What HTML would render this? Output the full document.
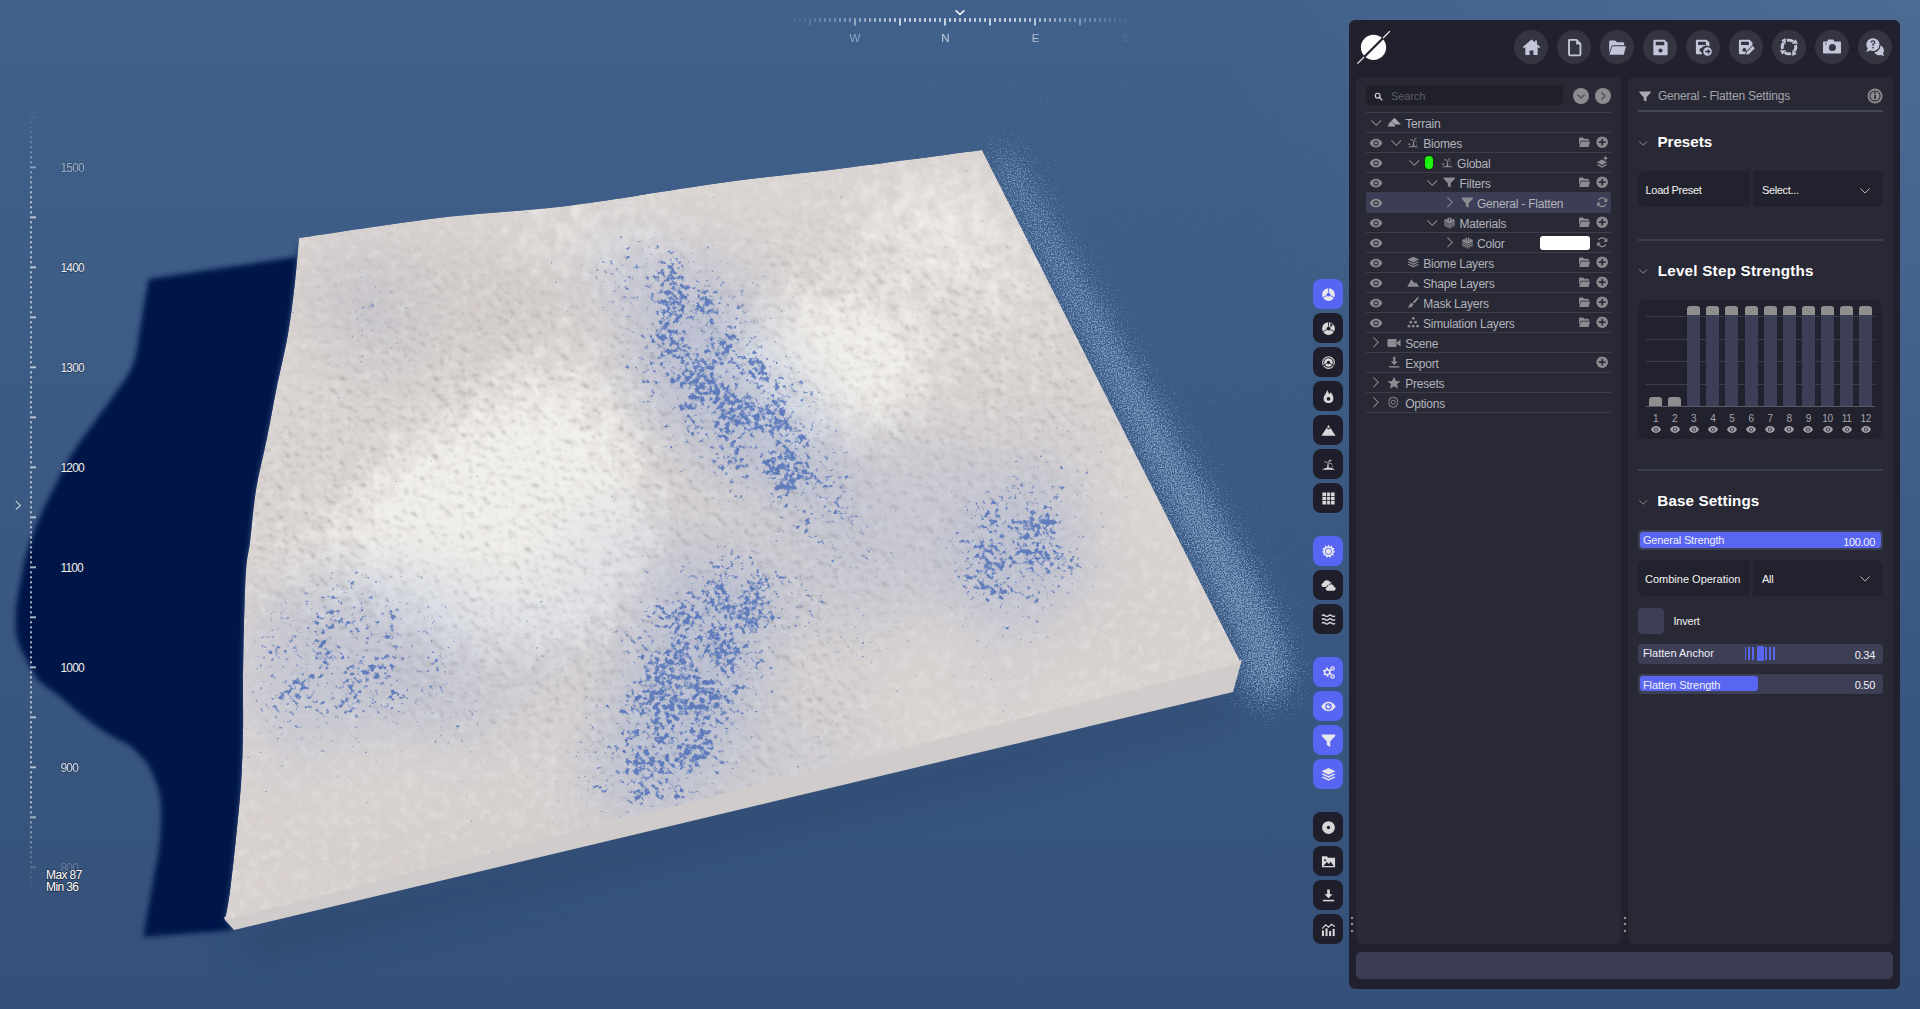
<!DOCTYPE html>
<html><head><meta charset="utf-8">
<style>
html,body{margin:0;padding:0;width:1920px;height:1009px;overflow:hidden;background:#3d5b84;font-family:"Liberation Sans",sans-serif;}
.a{position:absolute;}
.t{line-height:1;white-space:nowrap;}
svg.a{overflow:visible;}
</style></head><body>
<svg id="scene" class="a" style="left:0;top:0" width="1920" height="1009" viewBox="0 0 1920 1009">
<defs>
<linearGradient id="bg" x1="0" y1="0" x2="0" y2="1">
<stop offset="0" stop-color="#40618b"/>
<stop offset="1" stop-color="#35517a"/>
</linearGradient>
<radialGradient id="bgtr" cx="1920" cy="0" r="700" gradientUnits="userSpaceOnUse">
<stop offset="0" stop-color="#7a90b0" stop-opacity="0.22"/>
<stop offset="1" stop-color="#7a90b0" stop-opacity="0"/>
</radialGradient>
<filter id="blur2" x="-10%" y="-10%" width="120%" height="120%"><feGaussianBlur stdDeviation="2.8"/></filter>
<filter id="glow" x="-30%" y="-30%" width="160%" height="160%"><feGaussianBlur stdDeviation="16"/></filter>
<filter id="blur30" x="-50%" y="-50%" width="200%" height="200%"><feGaussianBlur stdDeviation="28"/></filter>
<filter id="blur18" x="-50%" y="-50%" width="200%" height="200%"><feGaussianBlur stdDeviation="18"/></filter>
<filter id="blur20" x="-50%" y="-50%" width="200%" height="200%"><feGaussianBlur stdDeviation="22"/></filter>
<filter id="bluespeck" filterUnits="userSpaceOnUse" x="220" y="140" width="1030" height="790">
  <feGaussianBlur in="SourceGraphic" stdDeviation="26" result="m"/>
  <feColorMatrix in="m" type="matrix" values="0 0 0 0 0  0 0 0 0 0  0 0 0 0 0  0 0 0 1 0" result="ma"/>
  <feTurbulence type="fractalNoise" baseFrequency="0.035" numOctaves="2" seed="19" result="n2"/>
  <feColorMatrix in="n2" type="matrix" values="0 0 0 0 0  0 0 0 0 0  0 0 0 0 0  2.2 0 0 0 -0.55" result="n2a"/>
  <feComposite in="ma" in2="n2a" operator="arithmetic" k1="1.3" k2="0.25" k3="0" k4="0" result="mm"/>
  <feTurbulence type="fractalNoise" baseFrequency="0.2" numOctaves="3" seed="7" result="n"/>
  <feColorMatrix in="n" type="matrix" values="0 0 0 0 0  0 0 0 0 0  0 0 0 0 0  1 0 0 0 0" result="na"/>
  <feComposite in="mm" in2="na" operator="arithmetic" k1="0" k2="2.3" k3="-5.5" k4="1.02" result="a"/>
  <feFlood flood-color="#3a60b4"/>
  <feComposite in2="a" operator="in"/>
  <feGaussianBlur stdDeviation="0.6"/>
</filter>
<filter id="brightspeck" filterUnits="userSpaceOnUse" x="220" y="140" width="1030" height="790">
  <feGaussianBlur in="SourceGraphic" stdDeviation="30" result="m"/>
  <feColorMatrix in="m" type="matrix" values="0 0 0 0 0  0 0 0 0 0  0 0 0 0 0  0 0 0 1 0" result="ma"/>
  <feTurbulence type="fractalNoise" baseFrequency="0.07" numOctaves="4" seed="3" result="n"/>
  <feColorMatrix in="n" type="matrix" values="0 0 0 0 0  0 0 0 0 0  0 0 0 0 0  1 0 0 0 0" result="na"/>
  <feComposite in="ma" in2="na" operator="arithmetic" k1="0" k2="1.6" k3="-1.2" k4="0.45" result="a"/>
  <feFlood flood-color="#f1efea"/>
  <feComposite in2="a" operator="in"/>
</filter>
<filter id="glowspeck" filterUnits="userSpaceOnUse" x="900" y="80" width="480" height="720">
  <feGaussianBlur in="SourceGraphic" stdDeviation="18" result="m"/>
  <feColorMatrix in="m" type="matrix" values="0 0 0 0 0  0 0 0 0 0  0 0 0 0 0  0 0 0 1 0" result="ma"/>
  <feTurbulence type="fractalNoise" baseFrequency="0.7" numOctaves="2" seed="5" result="n"/>
  <feColorMatrix in="n" type="matrix" values="0 0 0 0 0  0 0 0 0 0  0 0 0 0 0  1 0 0 0 0" result="na"/>
  <feComposite in="ma" in2="na" operator="arithmetic" k1="0" k2="1.5" k3="-3" k4="0.72" result="a"/>
  <feFlood flood-color="#7d9dc2"/>
  <feComposite in2="a" operator="in"/>
</filter>
<filter id="relief" filterUnits="userSpaceOnUse" x="220" y="140" width="1030" height="790" color-interpolation-filters="sRGB">
  <feTurbulence type="fractalNoise" baseFrequency="0.14" numOctaves="3" seed="2" result="n"/>
  <feDiffuseLighting in="n" surfaceScale="2.2" diffuseConstant="1.32" lighting-color="#ffffff" result="l">
    <feDistantLight azimuth="-60" elevation="58"/>
  </feDiffuseLighting>
  <feGaussianBlur stdDeviation="0.9"/>
</filter>
<mask id="roughmask" maskUnits="userSpaceOnUse" x="0" y="0" width="1920" height="1009">
  <g filter="url(#blur30)">
    <ellipse cx="560" cy="520" rx="330" ry="220" fill="#fff" opacity="0.9"/>
    <ellipse cx="850" cy="420" rx="260" ry="200" fill="#fff" opacity="0.8"/>
    <ellipse cx="720" cy="700" rx="150" ry="130" fill="#fff" opacity="0.8"/>
    <ellipse cx="420" cy="300" rx="130" ry="60" fill="#fff" opacity="0.5"/>
  </g>
</mask>
<clipPath id="tclip"><path d="M299,238 C322.2,234.7 396.3,223.0 438.0,218.0 C479.7,213.0 518.2,211.3 549.0,208.0 C579.8,204.7 604.5,200.7 623.0,198.0 C641.5,195.3 641.5,194.8 660.0,192.0 C678.5,189.2 703.2,185.0 734.0,181.0 C764.8,177.0 803.7,173.2 845.0,168.0 C886.3,162.8 959.2,153.0 982.0,150.0 L1241,663 L225,920 C225.8,915.2 228.2,904.7 230.0,891.0 C231.8,877.3 234.2,855.8 236.0,838.0 C237.8,820.2 239.8,801.8 241.0,784.0 C242.2,766.2 242.7,748.8 243.0,731.0 C243.3,713.2 242.8,694.8 243.0,677.0 C243.2,659.2 243.5,641.8 244.0,624.0 C244.5,606.2 245.0,583.7 246.0,570.0 C247.0,556.3 248.3,555.3 250.0,542.0 C251.7,528.7 253.2,507.3 256.0,490.0 C258.8,472.7 263.5,455.3 267.0,438.0 C270.5,420.7 273.5,403.3 277.0,386.0 C280.5,368.7 285.0,351.3 288.0,334.0 C291.0,316.7 293.2,298.0 295.0,282.0 C296.8,266.0 298.3,245.3 299.0,238.0 Z"/></clipPath>
<filter id="speck" filterUnits="userSpaceOnUse" x="220" y="140" width="1030" height="790">
  <feTurbulence type="fractalNoise" baseFrequency="0.14" numOctaves="3" seed="7" result="n"/>
  <feColorMatrix in="n" type="matrix" values="0 0 0 0 0.22  0 0 0 0 0.38  0 0 0 0 0.74  -11 0 0 0 4.6" result="s"/>
</filter>
<filter id="mottle" filterUnits="userSpaceOnUse" x="220" y="140" width="1030" height="790">
  <feTurbulence type="fractalNoise" baseFrequency="0.1" numOctaves="3" seed="11" result="n"/>
  <feColorMatrix in="n" type="matrix" values="0 0 0 0 1  0 0 0 0 1  0 0 0 0 1  2 0 0 0 -0.9" result="w"/>
</filter>
<mask id="bluemask" maskUnits="userSpaceOnUse" x="0" y="0" width="1920" height="1009">
  <g filter="url(#blur18)"><ellipse cx="735" cy="405" rx="120" ry="55" transform="rotate(42 735 405)" fill="#fff" opacity="1.00"/><ellipse cx="680" cy="285" rx="85" ry="30" transform="rotate(15 680 285)" fill="#fff" opacity="0.75"/><ellipse cx="620" cy="270" rx="35" ry="25" transform="rotate(0 620 270)" fill="#fff" opacity="0.45"/><ellipse cx="835" cy="520" rx="60" ry="30" transform="rotate(30 835 520)" fill="#fff" opacity="0.60"/><ellipse cx="790" cy="470" rx="40" ry="30" transform="rotate(0 790 470)" fill="#fff" opacity="0.50"/><ellipse cx="690" cy="680" rx="130" ry="60" transform="rotate(112 690 680)" fill="#fff" opacity="1.00"/><ellipse cx="770" cy="600" rx="45" ry="40" transform="rotate(0 770 600)" fill="#fff" opacity="0.50"/><ellipse cx="650" cy="790" rx="40" ry="35" transform="rotate(0 650 790)" fill="#fff" opacity="0.50"/><ellipse cx="860" cy="620" rx="40" ry="40" transform="rotate(0 860 620)" fill="#fff" opacity="0.35"/><ellipse cx="1015" cy="555" rx="70" ry="58" transform="rotate(-20 1015 555)" fill="#fff" opacity="0.85"/><ellipse cx="1050" cy="470" rx="30" ry="40" transform="rotate(0 1050 470)" fill="#fff" opacity="0.40"/><ellipse cx="995" cy="665" rx="25" ry="25" transform="rotate(0 995 665)" fill="#fff" opacity="0.40"/><ellipse cx="350" cy="655" rx="105" ry="75" transform="rotate(-10 350 655)" fill="#fff" opacity="0.55"/><ellipse cx="290" cy="720" rx="45" ry="40" transform="rotate(0 290 720)" fill="#fff" opacity="0.35"/><ellipse cx="370" cy="310" rx="28" ry="50" transform="rotate(-20 370 310)" fill="#fff" opacity="0.45"/><ellipse cx="560" cy="630" rx="35" ry="40" transform="rotate(0 560 630)" fill="#fff" opacity="0.30"/><ellipse cx="600" cy="770" rx="40" ry="40" transform="rotate(0 600 770)" fill="#fff" opacity="0.35"/><ellipse cx="460" cy="720" rx="50" ry="40" transform="rotate(0 460 720)" fill="#fff" opacity="0.30"/></g>
</mask>
</defs>
<rect width="1920" height="1009" fill="url(#bg)"/>
<rect width="1920" height="1009" fill="url(#bgtr)"/>
<rect x="789.0" y="18.2" width="2" height="3.7" fill="#dde4ee" opacity="0.04"/>
<rect x="794.0" y="18.2" width="2" height="3.7" fill="#dde4ee" opacity="0.07"/>
<rect x="799.0" y="18.2" width="2" height="3.7" fill="#dde4ee" opacity="0.11"/>
<rect x="804.0" y="18.2" width="2" height="3.7" fill="#dde4ee" opacity="0.15"/>
<rect x="809.0" y="18.2" width="2" height="7.3" fill="#dde4ee" opacity="0.18"/>
<rect x="814.0" y="18.2" width="2" height="3.7" fill="#dde4ee" opacity="0.22"/>
<rect x="819.0" y="18.2" width="2" height="3.7" fill="#dde4ee" opacity="0.26"/>
<rect x="824.0" y="18.2" width="2" height="3.7" fill="#dde4ee" opacity="0.30"/>
<rect x="829.0" y="18.2" width="2" height="3.7" fill="#dde4ee" opacity="0.33"/>
<rect x="834.0" y="18.2" width="2" height="3.7" fill="#dde4ee" opacity="0.37"/>
<rect x="839.0" y="18.2" width="2" height="3.7" fill="#dde4ee" opacity="0.41"/>
<rect x="844.0" y="18.2" width="2" height="3.7" fill="#dde4ee" opacity="0.44"/>
<rect x="849.0" y="18.2" width="2" height="3.7" fill="#dde4ee" opacity="0.48"/>
<rect x="854.0" y="18.2" width="2" height="7.3" fill="#dde4ee" opacity="0.52"/>
<rect x="859.0" y="18.2" width="2" height="3.7" fill="#dde4ee" opacity="0.55"/>
<rect x="864.0" y="18.2" width="2" height="3.7" fill="#dde4ee" opacity="0.59"/>
<rect x="869.0" y="18.2" width="2" height="3.7" fill="#dde4ee" opacity="0.63"/>
<rect x="874.0" y="18.2" width="2" height="3.7" fill="#dde4ee" opacity="0.67"/>
<rect x="879.0" y="18.2" width="2" height="3.7" fill="#dde4ee" opacity="0.70"/>
<rect x="884.0" y="18.2" width="2" height="3.7" fill="#dde4ee" opacity="0.74"/>
<rect x="889.0" y="18.2" width="2" height="3.7" fill="#dde4ee" opacity="0.78"/>
<rect x="894.0" y="18.2" width="2" height="3.7" fill="#dde4ee" opacity="0.81"/>
<rect x="899.0" y="18.2" width="2" height="7.3" fill="#dde4ee" opacity="0.85"/>
<rect x="904.0" y="18.2" width="2" height="3.7" fill="#dde4ee" opacity="0.85"/>
<rect x="909.0" y="18.2" width="2" height="3.7" fill="#dde4ee" opacity="0.85"/>
<rect x="914.0" y="18.2" width="2" height="3.7" fill="#dde4ee" opacity="0.85"/>
<rect x="919.0" y="18.2" width="2" height="3.7" fill="#dde4ee" opacity="0.85"/>
<rect x="924.0" y="18.2" width="2" height="3.7" fill="#dde4ee" opacity="0.85"/>
<rect x="929.0" y="18.2" width="2" height="3.7" fill="#dde4ee" opacity="0.85"/>
<rect x="934.0" y="18.2" width="2" height="3.7" fill="#dde4ee" opacity="0.85"/>
<rect x="939.0" y="18.2" width="2" height="3.7" fill="#dde4ee" opacity="0.85"/>
<rect x="944.0" y="18.2" width="2" height="7.3" fill="#dde4ee" opacity="0.85"/>
<rect x="949.0" y="18.2" width="2" height="3.7" fill="#dde4ee" opacity="0.85"/>
<rect x="954.0" y="18.2" width="2" height="3.7" fill="#dde4ee" opacity="0.85"/>
<rect x="959.0" y="18.2" width="2" height="3.7" fill="#dde4ee" opacity="0.85"/>
<rect x="964.0" y="18.2" width="2" height="3.7" fill="#dde4ee" opacity="0.85"/>
<rect x="969.0" y="18.2" width="2" height="3.7" fill="#dde4ee" opacity="0.85"/>
<rect x="974.0" y="18.2" width="2" height="3.7" fill="#dde4ee" opacity="0.85"/>
<rect x="979.0" y="18.2" width="2" height="3.7" fill="#dde4ee" opacity="0.85"/>
<rect x="984.0" y="18.2" width="2" height="3.7" fill="#dde4ee" opacity="0.85"/>
<rect x="989.0" y="18.2" width="2" height="7.3" fill="#dde4ee" opacity="0.85"/>
<rect x="994.0" y="18.2" width="2" height="3.7" fill="#dde4ee" opacity="0.85"/>
<rect x="999.0" y="18.2" width="2" height="3.7" fill="#dde4ee" opacity="0.85"/>
<rect x="1004.0" y="18.2" width="2" height="3.7" fill="#dde4ee" opacity="0.85"/>
<rect x="1009.0" y="18.2" width="2" height="3.7" fill="#dde4ee" opacity="0.85"/>
<rect x="1014.0" y="18.2" width="2" height="3.7" fill="#dde4ee" opacity="0.85"/>
<rect x="1019.0" y="18.2" width="2" height="3.7" fill="#dde4ee" opacity="0.85"/>
<rect x="1024.0" y="18.2" width="2" height="3.7" fill="#dde4ee" opacity="0.81"/>
<rect x="1029.0" y="18.2" width="2" height="3.7" fill="#dde4ee" opacity="0.78"/>
<rect x="1034.0" y="18.2" width="2" height="7.3" fill="#dde4ee" opacity="0.74"/>
<rect x="1039.0" y="18.2" width="2" height="3.7" fill="#dde4ee" opacity="0.70"/>
<rect x="1044.0" y="18.2" width="2" height="3.7" fill="#dde4ee" opacity="0.67"/>
<rect x="1049.0" y="18.2" width="2" height="3.7" fill="#dde4ee" opacity="0.63"/>
<rect x="1054.0" y="18.2" width="2" height="3.7" fill="#dde4ee" opacity="0.59"/>
<rect x="1059.0" y="18.2" width="2" height="3.7" fill="#dde4ee" opacity="0.55"/>
<rect x="1064.0" y="18.2" width="2" height="3.7" fill="#dde4ee" opacity="0.52"/>
<rect x="1069.0" y="18.2" width="2" height="3.7" fill="#dde4ee" opacity="0.48"/>
<rect x="1074.0" y="18.2" width="2" height="3.7" fill="#dde4ee" opacity="0.44"/>
<rect x="1079.0" y="18.2" width="2" height="7.3" fill="#dde4ee" opacity="0.41"/>
<rect x="1084.0" y="18.2" width="2" height="3.7" fill="#dde4ee" opacity="0.37"/>
<rect x="1089.0" y="18.2" width="2" height="3.7" fill="#dde4ee" opacity="0.33"/>
<rect x="1094.0" y="18.2" width="2" height="3.7" fill="#dde4ee" opacity="0.30"/>
<rect x="1099.0" y="18.2" width="2" height="3.7" fill="#dde4ee" opacity="0.26"/>
<rect x="1104.0" y="18.2" width="2" height="3.7" fill="#dde4ee" opacity="0.22"/>
<rect x="1109.0" y="18.2" width="2" height="3.7" fill="#dde4ee" opacity="0.18"/>
<rect x="1114.0" y="18.2" width="2" height="3.7" fill="#dde4ee" opacity="0.15"/>
<rect x="1119.0" y="18.2" width="2" height="3.7" fill="#dde4ee" opacity="0.11"/>
<rect x="1124.0" y="18.2" width="2" height="7.3" fill="#dde4ee" opacity="0.07"/>
<text x="855" y="41.6" font-size="11.5" text-anchor="middle" fill="#dfe6ef" opacity="0.50" font-family="Liberation Sans">W</text>
<text x="945.5" y="41.6" font-size="11.5" text-anchor="middle" fill="#dfe6ef" opacity="0.80" font-family="Liberation Sans">N</text>
<text x="1035.5" y="41.6" font-size="11.5" text-anchor="middle" fill="#dfe6ef" opacity="0.70" font-family="Liberation Sans">E</text>
<text x="1125" y="41.6" font-size="11.5" text-anchor="middle" fill="#dfe6ef" opacity="0.10" font-family="Liberation Sans">S</text>
<path d="M955.6,10.4 L960,14.4 L964.4,10.4" fill="none" stroke="#f4f6fa" stroke-width="1.5"/>
<path filter="url(#glowspeck)" fill="#fff" d="M978,146 L1238,663 L1230,695 L1265,718 L1305,685 L1278,600 L1012,140 Z"/>
<path filter="url(#blur2)" fill="#03144a" d="M296,257 L148.6,279 C148.0,282.4 146.4,291.2 145.0,299.5 C143.6,307.8 141.4,320.6 140.0,329.0 C138.6,337.4 138.3,343.2 136.8,350.0 C135.3,356.8 135.1,361.7 130.8,370.0 C126.5,378.3 117.9,389.7 111.0,399.6 C104.1,409.5 95.8,420.1 89.2,429.3 C82.6,438.5 76.4,447.1 71.4,455.0 C66.5,462.9 63.8,468.7 59.5,477.0 C55.2,485.3 49.9,495.4 45.6,504.6 C41.3,513.8 37.0,524.0 33.7,532.4 C30.4,540.8 28.1,547.2 26.0,555.0 C23.9,562.8 22.7,569.6 21.0,579.0 C19.3,588.4 16.6,601.5 16.0,611.5 C15.4,621.5 15.4,630.8 17.3,639.0 C19.2,647.2 23.6,654.0 27.3,661.0 C31.0,668.0 34.2,675.2 39.6,681.0 C45.0,686.8 52.9,690.7 59.5,696.0 C66.1,701.3 72.4,707.7 79.0,713.0 C85.6,718.3 92.3,723.5 99.0,728.0 C105.7,732.5 114.0,737.2 119.0,740.0 C124.0,742.8 124.5,741.3 129.0,745.0 C133.5,748.7 141.5,755.8 146.0,762.0 C150.5,768.2 153.5,775.0 156.0,782.0 C158.5,789.0 160.3,794.1 161.0,804.0 C161.7,813.9 161.2,829.0 160.0,841.5 C158.8,854.0 155.7,867.1 153.6,879.0 C151.5,890.9 149.1,903.3 147.4,913.0 C145.7,922.7 143.9,933.0 143.2,937.0 L234,930 L225,920 C225.8,915.2 228.2,904.7 230.0,891.0 C231.8,877.3 234.2,855.8 236.0,838.0 C237.8,820.2 239.8,801.8 241.0,784.0 C242.2,766.2 242.7,748.8 243.0,731.0 C243.3,713.2 242.8,694.8 243.0,677.0 C243.2,659.2 243.5,641.8 244.0,624.0 C244.5,606.2 245.0,583.7 246.0,570.0 C247.0,556.3 248.3,555.3 250.0,542.0 C251.7,528.7 253.2,507.3 256.0,490.0 C258.8,472.7 263.5,455.3 267.0,438.0 C270.5,420.7 273.5,403.3 277.0,386.0 C280.5,368.7 285.0,351.3 288.0,334.0 C291.0,316.7 293.2,298.0 295.0,282.0 C296.8,266.0 298.3,245.3 299.0,238.0 Z"/>
<rect x="30" y="116.3" width="6" height="2" fill="#dfe6f0" opacity="0.08"/>
<rect x="30" y="121.3" width="2" height="2" fill="#dfe6f0" opacity="0.09"/>
<rect x="30" y="126.3" width="2" height="2" fill="#dfe6f0" opacity="0.13"/>
<rect x="30" y="131.3" width="2" height="2" fill="#dfe6f0" opacity="0.17"/>
<rect x="30" y="136.3" width="2" height="2" fill="#dfe6f0" opacity="0.22"/>
<rect x="30" y="141.3" width="2" height="2" fill="#dfe6f0" opacity="0.26"/>
<rect x="30" y="146.3" width="2" height="2" fill="#dfe6f0" opacity="0.30"/>
<rect x="30" y="151.3" width="2" height="2" fill="#dfe6f0" opacity="0.34"/>
<rect x="30" y="156.3" width="2" height="2" fill="#dfe6f0" opacity="0.39"/>
<rect x="30" y="161.3" width="2" height="2" fill="#dfe6f0" opacity="0.43"/>
<rect x="30" y="166.3" width="6" height="2" fill="#dfe6f0" opacity="0.47"/>
<rect x="30" y="171.3" width="2" height="2" fill="#dfe6f0" opacity="0.51"/>
<rect x="30" y="176.3" width="2" height="2" fill="#dfe6f0" opacity="0.56"/>
<rect x="30" y="181.3" width="2" height="2" fill="#dfe6f0" opacity="0.60"/>
<rect x="30" y="186.3" width="2" height="2" fill="#dfe6f0" opacity="0.64"/>
<rect x="30" y="191.3" width="2" height="2" fill="#dfe6f0" opacity="0.68"/>
<rect x="30" y="196.3" width="2" height="2" fill="#dfe6f0" opacity="0.73"/>
<rect x="30" y="201.3" width="2" height="2" fill="#dfe6f0" opacity="0.75"/>
<rect x="30" y="206.3" width="2" height="2" fill="#dfe6f0" opacity="0.75"/>
<rect x="30" y="211.3" width="2" height="2" fill="#dfe6f0" opacity="0.75"/>
<rect x="30" y="216.3" width="6" height="2" fill="#dfe6f0" opacity="0.75"/>
<rect x="30" y="221.3" width="2" height="2" fill="#dfe6f0" opacity="0.75"/>
<rect x="30" y="226.3" width="2" height="2" fill="#dfe6f0" opacity="0.75"/>
<rect x="30" y="231.3" width="2" height="2" fill="#dfe6f0" opacity="0.75"/>
<rect x="30" y="236.3" width="2" height="2" fill="#dfe6f0" opacity="0.75"/>
<rect x="30" y="241.3" width="2" height="2" fill="#dfe6f0" opacity="0.75"/>
<rect x="30" y="246.3" width="2" height="2" fill="#dfe6f0" opacity="0.75"/>
<rect x="30" y="251.3" width="2" height="2" fill="#dfe6f0" opacity="0.75"/>
<rect x="30" y="256.3" width="2" height="2" fill="#dfe6f0" opacity="0.75"/>
<rect x="30" y="261.3" width="2" height="2" fill="#dfe6f0" opacity="0.75"/>
<rect x="30" y="266.3" width="6" height="2" fill="#dfe6f0" opacity="0.75"/>
<rect x="30" y="271.3" width="2" height="2" fill="#dfe6f0" opacity="0.75"/>
<rect x="30" y="276.3" width="2" height="2" fill="#dfe6f0" opacity="0.75"/>
<rect x="30" y="281.3" width="2" height="2" fill="#dfe6f0" opacity="0.75"/>
<rect x="30" y="286.3" width="2" height="2" fill="#dfe6f0" opacity="0.75"/>
<rect x="30" y="291.3" width="2" height="2" fill="#dfe6f0" opacity="0.75"/>
<rect x="30" y="296.3" width="2" height="2" fill="#dfe6f0" opacity="0.75"/>
<rect x="30" y="301.3" width="2" height="2" fill="#dfe6f0" opacity="0.75"/>
<rect x="30" y="306.3" width="2" height="2" fill="#dfe6f0" opacity="0.75"/>
<rect x="30" y="311.3" width="2" height="2" fill="#dfe6f0" opacity="0.75"/>
<rect x="30" y="316.3" width="6" height="2" fill="#dfe6f0" opacity="0.75"/>
<rect x="30" y="321.3" width="2" height="2" fill="#dfe6f0" opacity="0.75"/>
<rect x="30" y="326.3" width="2" height="2" fill="#dfe6f0" opacity="0.75"/>
<rect x="30" y="331.3" width="2" height="2" fill="#dfe6f0" opacity="0.75"/>
<rect x="30" y="336.3" width="2" height="2" fill="#dfe6f0" opacity="0.75"/>
<rect x="30" y="341.3" width="2" height="2" fill="#dfe6f0" opacity="0.75"/>
<rect x="30" y="346.3" width="2" height="2" fill="#dfe6f0" opacity="0.75"/>
<rect x="30" y="351.3" width="2" height="2" fill="#dfe6f0" opacity="0.75"/>
<rect x="30" y="356.3" width="2" height="2" fill="#dfe6f0" opacity="0.75"/>
<rect x="30" y="361.3" width="2" height="2" fill="#dfe6f0" opacity="0.75"/>
<rect x="30" y="366.3" width="6" height="2" fill="#dfe6f0" opacity="0.75"/>
<rect x="30" y="371.3" width="2" height="2" fill="#dfe6f0" opacity="0.75"/>
<rect x="30" y="376.3" width="2" height="2" fill="#dfe6f0" opacity="0.75"/>
<rect x="30" y="381.3" width="2" height="2" fill="#dfe6f0" opacity="0.75"/>
<rect x="30" y="386.3" width="2" height="2" fill="#dfe6f0" opacity="0.75"/>
<rect x="30" y="391.3" width="2" height="2" fill="#dfe6f0" opacity="0.75"/>
<rect x="30" y="396.3" width="2" height="2" fill="#dfe6f0" opacity="0.75"/>
<rect x="30" y="401.3" width="2" height="2" fill="#dfe6f0" opacity="0.75"/>
<rect x="30" y="406.3" width="2" height="2" fill="#dfe6f0" opacity="0.75"/>
<rect x="30" y="411.3" width="2" height="2" fill="#dfe6f0" opacity="0.75"/>
<rect x="30" y="416.3" width="6" height="2" fill="#dfe6f0" opacity="0.75"/>
<rect x="30" y="421.3" width="2" height="2" fill="#dfe6f0" opacity="0.75"/>
<rect x="30" y="426.3" width="2" height="2" fill="#dfe6f0" opacity="0.75"/>
<rect x="30" y="431.3" width="2" height="2" fill="#dfe6f0" opacity="0.75"/>
<rect x="30" y="436.3" width="2" height="2" fill="#dfe6f0" opacity="0.75"/>
<rect x="30" y="441.3" width="2" height="2" fill="#dfe6f0" opacity="0.75"/>
<rect x="30" y="446.3" width="2" height="2" fill="#dfe6f0" opacity="0.75"/>
<rect x="30" y="451.3" width="2" height="2" fill="#dfe6f0" opacity="0.75"/>
<rect x="30" y="456.3" width="2" height="2" fill="#dfe6f0" opacity="0.75"/>
<rect x="30" y="461.3" width="2" height="2" fill="#dfe6f0" opacity="0.75"/>
<rect x="30" y="466.3" width="6" height="2" fill="#dfe6f0" opacity="0.75"/>
<rect x="30" y="471.3" width="2" height="2" fill="#dfe6f0" opacity="0.75"/>
<rect x="30" y="476.3" width="2" height="2" fill="#dfe6f0" opacity="0.75"/>
<rect x="30" y="481.3" width="2" height="2" fill="#dfe6f0" opacity="0.75"/>
<rect x="30" y="486.3" width="2" height="2" fill="#dfe6f0" opacity="0.75"/>
<rect x="30" y="491.3" width="2" height="2" fill="#dfe6f0" opacity="0.75"/>
<rect x="30" y="496.3" width="2" height="2" fill="#dfe6f0" opacity="0.75"/>
<rect x="30" y="501.3" width="2" height="2" fill="#dfe6f0" opacity="0.75"/>
<rect x="30" y="506.3" width="2" height="2" fill="#dfe6f0" opacity="0.75"/>
<rect x="30" y="511.3" width="2" height="2" fill="#dfe6f0" opacity="0.75"/>
<rect x="30" y="516.3" width="6" height="2" fill="#dfe6f0" opacity="0.75"/>
<rect x="30" y="521.3" width="2" height="2" fill="#dfe6f0" opacity="0.75"/>
<rect x="30" y="526.3" width="2" height="2" fill="#dfe6f0" opacity="0.75"/>
<rect x="30" y="531.3" width="2" height="2" fill="#dfe6f0" opacity="0.75"/>
<rect x="30" y="536.3" width="2" height="2" fill="#dfe6f0" opacity="0.75"/>
<rect x="30" y="541.3" width="2" height="2" fill="#dfe6f0" opacity="0.75"/>
<rect x="30" y="546.3" width="2" height="2" fill="#dfe6f0" opacity="0.75"/>
<rect x="30" y="551.3" width="2" height="2" fill="#dfe6f0" opacity="0.75"/>
<rect x="30" y="556.3" width="2" height="2" fill="#dfe6f0" opacity="0.75"/>
<rect x="30" y="561.3" width="2" height="2" fill="#dfe6f0" opacity="0.75"/>
<rect x="30" y="566.3" width="6" height="2" fill="#dfe6f0" opacity="0.75"/>
<rect x="30" y="571.3" width="2" height="2" fill="#dfe6f0" opacity="0.75"/>
<rect x="30" y="576.3" width="2" height="2" fill="#dfe6f0" opacity="0.75"/>
<rect x="30" y="581.3" width="2" height="2" fill="#dfe6f0" opacity="0.75"/>
<rect x="30" y="586.3" width="2" height="2" fill="#dfe6f0" opacity="0.75"/>
<rect x="30" y="591.3" width="2" height="2" fill="#dfe6f0" opacity="0.75"/>
<rect x="30" y="596.3" width="2" height="2" fill="#dfe6f0" opacity="0.75"/>
<rect x="30" y="601.3" width="2" height="2" fill="#dfe6f0" opacity="0.75"/>
<rect x="30" y="606.3" width="2" height="2" fill="#dfe6f0" opacity="0.75"/>
<rect x="30" y="611.3" width="2" height="2" fill="#dfe6f0" opacity="0.75"/>
<rect x="30" y="616.3" width="6" height="2" fill="#dfe6f0" opacity="0.75"/>
<rect x="30" y="621.3" width="2" height="2" fill="#dfe6f0" opacity="0.75"/>
<rect x="30" y="626.3" width="2" height="2" fill="#dfe6f0" opacity="0.75"/>
<rect x="30" y="631.3" width="2" height="2" fill="#dfe6f0" opacity="0.75"/>
<rect x="30" y="636.3" width="2" height="2" fill="#dfe6f0" opacity="0.75"/>
<rect x="30" y="641.3" width="2" height="2" fill="#dfe6f0" opacity="0.75"/>
<rect x="30" y="646.3" width="2" height="2" fill="#dfe6f0" opacity="0.75"/>
<rect x="30" y="651.3" width="2" height="2" fill="#dfe6f0" opacity="0.75"/>
<rect x="30" y="656.3" width="2" height="2" fill="#dfe6f0" opacity="0.75"/>
<rect x="30" y="661.3" width="2" height="2" fill="#dfe6f0" opacity="0.75"/>
<rect x="30" y="666.3" width="6" height="2" fill="#dfe6f0" opacity="0.75"/>
<rect x="30" y="671.3" width="2" height="2" fill="#dfe6f0" opacity="0.75"/>
<rect x="30" y="676.3" width="2" height="2" fill="#dfe6f0" opacity="0.75"/>
<rect x="30" y="681.3" width="2" height="2" fill="#dfe6f0" opacity="0.75"/>
<rect x="30" y="686.3" width="2" height="2" fill="#dfe6f0" opacity="0.75"/>
<rect x="30" y="691.3" width="2" height="2" fill="#dfe6f0" opacity="0.75"/>
<rect x="30" y="696.3" width="2" height="2" fill="#dfe6f0" opacity="0.75"/>
<rect x="30" y="701.3" width="2" height="2" fill="#dfe6f0" opacity="0.75"/>
<rect x="30" y="706.3" width="2" height="2" fill="#dfe6f0" opacity="0.75"/>
<rect x="30" y="711.3" width="2" height="2" fill="#dfe6f0" opacity="0.75"/>
<rect x="30" y="716.3" width="6" height="2" fill="#dfe6f0" opacity="0.75"/>
<rect x="30" y="721.3" width="2" height="2" fill="#dfe6f0" opacity="0.75"/>
<rect x="30" y="726.3" width="2" height="2" fill="#dfe6f0" opacity="0.75"/>
<rect x="30" y="731.3" width="2" height="2" fill="#dfe6f0" opacity="0.75"/>
<rect x="30" y="736.3" width="2" height="2" fill="#dfe6f0" opacity="0.75"/>
<rect x="30" y="741.3" width="2" height="2" fill="#dfe6f0" opacity="0.75"/>
<rect x="30" y="746.3" width="2" height="2" fill="#dfe6f0" opacity="0.75"/>
<rect x="30" y="751.3" width="2" height="2" fill="#dfe6f0" opacity="0.75"/>
<rect x="30" y="756.3" width="2" height="2" fill="#dfe6f0" opacity="0.75"/>
<rect x="30" y="761.3" width="2" height="2" fill="#dfe6f0" opacity="0.75"/>
<rect x="30" y="766.3" width="6" height="2" fill="#dfe6f0" opacity="0.75"/>
<rect x="30" y="771.3" width="2" height="2" fill="#dfe6f0" opacity="0.75"/>
<rect x="30" y="776.3" width="2" height="2" fill="#dfe6f0" opacity="0.75"/>
<rect x="30" y="781.3" width="2" height="2" fill="#dfe6f0" opacity="0.75"/>
<rect x="30" y="786.3" width="2" height="2" fill="#dfe6f0" opacity="0.75"/>
<rect x="30" y="791.3" width="2" height="2" fill="#dfe6f0" opacity="0.75"/>
<rect x="30" y="796.3" width="2" height="2" fill="#dfe6f0" opacity="0.75"/>
<rect x="30" y="801.3" width="2" height="2" fill="#dfe6f0" opacity="0.73"/>
<rect x="30" y="806.3" width="2" height="2" fill="#dfe6f0" opacity="0.69"/>
<rect x="30" y="811.3" width="2" height="2" fill="#dfe6f0" opacity="0.65"/>
<rect x="30" y="816.3" width="6" height="2" fill="#dfe6f0" opacity="0.61"/>
<rect x="30" y="821.3" width="2" height="2" fill="#dfe6f0" opacity="0.57"/>
<rect x="30" y="826.3" width="2" height="2" fill="#dfe6f0" opacity="0.53"/>
<rect x="30" y="831.3" width="2" height="2" fill="#dfe6f0" opacity="0.49"/>
<rect x="30" y="836.3" width="2" height="2" fill="#dfe6f0" opacity="0.45"/>
<rect x="30" y="841.3" width="2" height="2" fill="#dfe6f0" opacity="0.41"/>
<rect x="30" y="846.3" width="2" height="2" fill="#dfe6f0" opacity="0.36"/>
<rect x="30" y="851.3" width="2" height="2" fill="#dfe6f0" opacity="0.32"/>
<rect x="30" y="856.3" width="2" height="2" fill="#dfe6f0" opacity="0.28"/>
<rect x="30" y="861.3" width="2" height="2" fill="#dfe6f0" opacity="0.24"/>
<rect x="30" y="866.3" width="6" height="2" fill="#dfe6f0" opacity="0.20"/>
<rect x="30" y="871.3" width="2" height="2" fill="#dfe6f0" opacity="0.16"/>
<rect x="30" y="876.3" width="2" height="2" fill="#dfe6f0" opacity="0.12"/>
<rect x="30" y="881.3" width="2" height="2" fill="#dfe6f0" opacity="0.08"/>
<rect x="30" y="886.3" width="2" height="2" fill="#dfe6f0" opacity="0.06"/>
<text x="60.5" y="171.7" font-size="12" letter-spacing="-0.85" fill="#e8ecf2" opacity="0.55" stroke="#15223a" stroke-width="1.3" stroke-opacity="0.55" paint-order="stroke" font-family="Liberation Sans">1500</text>
<text x="60.5" y="271.7" font-size="12" letter-spacing="-0.85" fill="#e8ecf2" opacity="1" stroke="#15223a" stroke-width="1.3" stroke-opacity="0.55" paint-order="stroke" font-family="Liberation Sans">1400</text>
<text x="60.5" y="371.7" font-size="12" letter-spacing="-0.85" fill="#e8ecf2" opacity="1" stroke="#15223a" stroke-width="1.3" stroke-opacity="0.55" paint-order="stroke" font-family="Liberation Sans">1300</text>
<text x="60.5" y="471.7" font-size="12" letter-spacing="-0.85" fill="#e8ecf2" opacity="1" stroke="#15223a" stroke-width="1.3" stroke-opacity="0.55" paint-order="stroke" font-family="Liberation Sans">1200</text>
<text x="60.5" y="571.7" font-size="12" letter-spacing="-0.85" fill="#e8ecf2" opacity="1" stroke="#15223a" stroke-width="1.3" stroke-opacity="0.55" paint-order="stroke" font-family="Liberation Sans">1100</text>
<text x="60.5" y="671.7" font-size="12" letter-spacing="-0.85" fill="#e8ecf2" opacity="1" stroke="#15223a" stroke-width="1.3" stroke-opacity="0.55" paint-order="stroke" font-family="Liberation Sans">1000</text>
<text x="60.5" y="771.7" font-size="12" letter-spacing="-0.85" fill="#e8ecf2" opacity="0.9" stroke="#15223a" stroke-width="1.3" stroke-opacity="0.55" paint-order="stroke" font-family="Liberation Sans">900</text>
<text x="60.5" y="871.7" font-size="12" letter-spacing="-0.85" fill="#e8ecf2" opacity="0.25" stroke="#15223a" stroke-width="1.3" stroke-opacity="0.55" paint-order="stroke" font-family="Liberation Sans">800</text>
<text x="46" y="879.2" font-size="12" letter-spacing="-0.6" fill="#ffffff" stroke="#101820" stroke-width="1.6" stroke-opacity="0.55" paint-order="stroke" font-family="Liberation Sans">Max 87</text>
<text x="46" y="890.8" font-size="12" letter-spacing="-0.6" fill="#ffffff" stroke="#101820" stroke-width="1.6" stroke-opacity="0.55" paint-order="stroke" font-family="Liberation Sans">Min 36</text>
<path d="M15.8,501.2 L20.4,505.4 L15.8,509.6" fill="none" stroke="#c8d2de" stroke-width="1.1"/>
<path filter="url(#blur18)" fill="#22385c" opacity="0.35" d="M234,930 L1233,692 L1240,715 L250,960 Z"/>
<path fill="#d1cccc" d="M224,917 L1242,660 L1241,663 L1233,692 L234,930 L225,920 Z"/>
<g clip-path="url(#tclip)">
<path fill="#d9d3d1" d="M299,238 C322.2,234.7 396.3,223.0 438.0,218.0 C479.7,213.0 518.2,211.3 549.0,208.0 C579.8,204.7 604.5,200.7 623.0,198.0 C641.5,195.3 641.5,194.8 660.0,192.0 C678.5,189.2 703.2,185.0 734.0,181.0 C764.8,177.0 803.7,173.2 845.0,168.0 C886.3,162.8 959.2,153.0 982.0,150.0 L1241,663 L225,920 C225.8,915.2 228.2,904.7 230.0,891.0 C231.8,877.3 234.2,855.8 236.0,838.0 C237.8,820.2 239.8,801.8 241.0,784.0 C242.2,766.2 242.7,748.8 243.0,731.0 C243.3,713.2 242.8,694.8 243.0,677.0 C243.2,659.2 243.5,641.8 244.0,624.0 C244.5,606.2 245.0,583.7 246.0,570.0 C247.0,556.3 248.3,555.3 250.0,542.0 C251.7,528.7 253.2,507.3 256.0,490.0 C258.8,472.7 263.5,455.3 267.0,438.0 C270.5,420.7 273.5,403.3 277.0,386.0 C280.5,368.7 285.0,351.3 288.0,334.0 C291.0,316.7 293.2,298.0 295.0,282.0 C296.8,266.0 298.3,245.3 299.0,238.0 Z"/>
<g filter="url(#blur20)"><ellipse cx="430" cy="300" rx="150" ry="55" fill="#c9c3c3" opacity="0.45"/><ellipse cx="520" cy="860" rx="220" ry="50" fill="#c9c3c3" opacity="0.3"/><ellipse cx="1120" cy="620" rx="90" ry="50" fill="#c9c3c3" opacity="0.15"/><ellipse cx="260" cy="850" rx="40" ry="80" fill="#c9c3c3" opacity="0.15"/></g>
<g filter="url(#brightspeck)"><ellipse cx="505" cy="535" rx="150" ry="120" fill="#fff" opacity="0.8"/><ellipse cx="830" cy="365" rx="105" ry="75" fill="#fff" opacity="0.75"/><ellipse cx="930" cy="230" rx="80" ry="55" fill="#fff" opacity="0.5"/><ellipse cx="560" cy="420" rx="90" ry="70" fill="#fff" opacity="0.5"/><ellipse cx="330" cy="560" rx="70" ry="60" fill="#fff" opacity="0.35"/><ellipse cx="600" cy="240" rx="100" ry="40" fill="#fff" opacity="0.35"/><ellipse cx="1000" cy="300" rx="60" ry="60" fill="#fff" opacity="0.3"/></g>
<rect x="220" y="140" width="1030" height="790" filter="url(#mottle)" opacity="0.25"/>
<rect x="220" y="140" width="1030" height="790" filter="url(#relief)" mask="url(#roughmask)" style="mix-blend-mode:multiply" opacity="0.5"/>
<g filter="url(#blur30)" opacity="0.4"><ellipse cx="735" cy="405" rx="132" ry="66" transform="rotate(42 735 405)" fill="#93a6d2" opacity="1.00"/><ellipse cx="680" cy="285" rx="94" ry="36" transform="rotate(15 680 285)" fill="#93a6d2" opacity="0.75"/><ellipse cx="620" cy="270" rx="38" ry="30" transform="rotate(0 620 270)" fill="#93a6d2" opacity="0.45"/><ellipse cx="835" cy="520" rx="66" ry="36" transform="rotate(30 835 520)" fill="#93a6d2" opacity="0.60"/><ellipse cx="790" cy="470" rx="44" ry="36" transform="rotate(0 790 470)" fill="#93a6d2" opacity="0.50"/><ellipse cx="690" cy="680" rx="143" ry="72" transform="rotate(112 690 680)" fill="#93a6d2" opacity="1.00"/><ellipse cx="770" cy="600" rx="50" ry="48" transform="rotate(0 770 600)" fill="#93a6d2" opacity="0.50"/><ellipse cx="650" cy="790" rx="44" ry="42" transform="rotate(0 650 790)" fill="#93a6d2" opacity="0.50"/><ellipse cx="860" cy="620" rx="44" ry="48" transform="rotate(0 860 620)" fill="#93a6d2" opacity="0.35"/><ellipse cx="1015" cy="555" rx="77" ry="70" transform="rotate(-20 1015 555)" fill="#93a6d2" opacity="0.85"/><ellipse cx="1050" cy="470" rx="33" ry="48" transform="rotate(0 1050 470)" fill="#93a6d2" opacity="0.40"/><ellipse cx="995" cy="665" rx="28" ry="30" transform="rotate(0 995 665)" fill="#93a6d2" opacity="0.40"/><ellipse cx="350" cy="655" rx="116" ry="90" transform="rotate(-10 350 655)" fill="#93a6d2" opacity="0.55"/><ellipse cx="290" cy="720" rx="50" ry="48" transform="rotate(0 290 720)" fill="#93a6d2" opacity="0.35"/><ellipse cx="370" cy="310" rx="31" ry="60" transform="rotate(-20 370 310)" fill="#93a6d2" opacity="0.45"/><ellipse cx="560" cy="630" rx="38" ry="48" transform="rotate(0 560 630)" fill="#93a6d2" opacity="0.30"/><ellipse cx="600" cy="770" rx="44" ry="48" transform="rotate(0 600 770)" fill="#93a6d2" opacity="0.35"/><ellipse cx="460" cy="720" rx="55" ry="48" transform="rotate(0 460 720)" fill="#93a6d2" opacity="0.30"/><ellipse cx="920" cy="520" rx="130" ry="90" fill="#93a6d2" opacity="0.5"/><ellipse cx="640" cy="560" rx="90" ry="60" fill="#93a6d2" opacity="0.4"/><ellipse cx="430" cy="650" rx="140" ry="80" fill="#93a6d2" opacity="0.4"/><ellipse cx="760" cy="760" rx="120" ry="60" fill="#93a6d2" opacity="0.35"/></g>
<g filter="url(#bluespeck)" opacity="0.72"><ellipse cx="735" cy="405" rx="120" ry="55" transform="rotate(42 735 405)" fill="#fff" opacity="1.00"/><ellipse cx="680" cy="285" rx="85" ry="30" transform="rotate(15 680 285)" fill="#fff" opacity="0.75"/><ellipse cx="620" cy="270" rx="35" ry="25" transform="rotate(0 620 270)" fill="#fff" opacity="0.45"/><ellipse cx="835" cy="520" rx="60" ry="30" transform="rotate(30 835 520)" fill="#fff" opacity="0.60"/><ellipse cx="790" cy="470" rx="40" ry="30" transform="rotate(0 790 470)" fill="#fff" opacity="0.50"/><ellipse cx="690" cy="680" rx="130" ry="60" transform="rotate(112 690 680)" fill="#fff" opacity="1.00"/><ellipse cx="770" cy="600" rx="45" ry="40" transform="rotate(0 770 600)" fill="#fff" opacity="0.50"/><ellipse cx="650" cy="790" rx="40" ry="35" transform="rotate(0 650 790)" fill="#fff" opacity="0.50"/><ellipse cx="860" cy="620" rx="40" ry="40" transform="rotate(0 860 620)" fill="#fff" opacity="0.35"/><ellipse cx="1015" cy="555" rx="70" ry="58" transform="rotate(-20 1015 555)" fill="#fff" opacity="0.85"/><ellipse cx="1050" cy="470" rx="30" ry="40" transform="rotate(0 1050 470)" fill="#fff" opacity="0.40"/><ellipse cx="995" cy="665" rx="25" ry="25" transform="rotate(0 995 665)" fill="#fff" opacity="0.40"/><ellipse cx="350" cy="655" rx="105" ry="75" transform="rotate(-10 350 655)" fill="#fff" opacity="0.55"/><ellipse cx="290" cy="720" rx="45" ry="40" transform="rotate(0 290 720)" fill="#fff" opacity="0.35"/><ellipse cx="370" cy="310" rx="28" ry="50" transform="rotate(-20 370 310)" fill="#fff" opacity="0.45"/><ellipse cx="560" cy="630" rx="35" ry="40" transform="rotate(0 560 630)" fill="#fff" opacity="0.30"/><ellipse cx="600" cy="770" rx="40" ry="40" transform="rotate(0 600 770)" fill="#fff" opacity="0.35"/><ellipse cx="460" cy="720" rx="50" ry="40" transform="rotate(0 460 720)" fill="#fff" opacity="0.30"/></g>
</g>
</svg>
<div class="a" style="left:1349px;top:20px;width:551px;height:969px;background:#21212d;border-radius:6px;"></div>
<svg class="a" style="left:1349px;top:20px" width="60" height="60" viewBox="1349 20 60 60"><circle cx="1373.5" cy="47.4" r="12.6" fill="#fdfdfd"/><line x1="1357.4" y1="63.7" x2="1389.9" y2="31.2" stroke="#21212d" stroke-width="2.2"/><line x1="1357.4" y1="63.7" x2="1364.2" y2="56.9" stroke="#f4f4f4" stroke-width="1.2"/><line x1="1383.1" y1="38" x2="1389.9" y2="31.2" stroke="#f4f4f4" stroke-width="1.2"/></svg>
<div class="a" style="left:1514.1px;top:30.1px;width:34.4px;height:34.4px;border-radius:50%;background:#353541"></div>
<svg class="a" style="left:1521.8px;top:37.8px;color:#c4c5d8;" width="19" height="19" viewBox="0 0 16 16" fill="#c4c5d8"><path d="M8 1.2 L0.6 7.6 L1.6 8.6 L2.8 7.6 V14.4 H6.4 V10.6 H9.6 V14.4 H13.2 V7.6 L14.4 8.6 L15.4 7.6 L12.6 5.2 V2 H11 V3.8 Z"/></svg>
<div class="a" style="left:1557.1px;top:30.1px;width:34.4px;height:34.4px;border-radius:50%;background:#353541"></div>
<svg class="a" style="left:1564.8px;top:37.8px;color:#c4c5d8;" width="19" height="19" viewBox="0 0 16 16" fill="#c4c5d8"><path fill="none" stroke="currentColor" stroke-width="1.6" stroke-linejoin="round" d="M3.4 1.6 H9.6 L13 5 V13.6 Q13 14.6 12 14.6 H4.4 Q3.4 14.6 3.4 13.6 Z"/><path d="M9.4 1.6 V5.4 H13 Z"/></svg>
<div class="a" style="left:1600.1px;top:30.1px;width:34.4px;height:34.4px;border-radius:50%;background:#353541"></div>
<svg class="a" style="left:1607.8px;top:37.8px;color:#c4c5d8;" width="19" height="19" viewBox="0 0 16 16" fill="#c4c5d8"><path d="M1 3 Q1 2 2 2 H6 L7.6 3.6 H12.6 Q13.6 3.6 13.6 4.6 V6 H4.2 Q3.2 6 2.9 7 L1 12.6 Z"/><path d="M3.6 7 H15.2 L13.2 14 H1.2 Z"/></svg>
<div class="a" style="left:1643.1px;top:30.1px;width:34.4px;height:34.4px;border-radius:50%;background:#353541"></div>
<svg class="a" style="left:1650.8px;top:37.8px;color:#c4c5d8;" width="19" height="19" viewBox="0 0 16 16" fill="#c4c5d8"><path d="M2 2.4 Q2 1.4 3 1.4 H11.4 L14 4 V13.6 Q14 14.6 13 14.6 H3 Q2 14.6 2 13.6 Z M4 3.2 V6.2 H11.2 V3.2 Z"/><circle cx="8" cy="10.6" r="1.8" fill="#353541"/></svg>
<div class="a" style="left:1686.1px;top:30.1px;width:34.4px;height:34.4px;border-radius:50%;background:#353541"></div>
<svg class="a" style="left:1693.8px;top:37.8px;color:#c4c5d8;" width="19" height="19" viewBox="0 0 16 16" fill="#c4c5d8"><path d="M1.6 2.4 Q1.6 1.4 2.6 1.4 H10.6 L13 3.8 V7.2 A4.4 4.4 0 0 0 7 13.6 H2.6 Q1.6 13.6 1.6 12.6 Z M3.4 3.2 V5.8 H10 V3.2 Z"/><circle cx="6.2" cy="10" r="1.6" fill="#353541"/><circle cx="11.4" cy="11.4" r="3.6"/><path fill="none" stroke="#353541" stroke-width="1.2" d="M9.4 11.4 H13 M11.6 9.8 L13.2 11.4 L11.6 13"/></svg>
<div class="a" style="left:1729.1px;top:30.1px;width:34.4px;height:34.4px;border-radius:50%;background:#353541"></div>
<svg class="a" style="left:1736.8px;top:37.8px;color:#c4c5d8;" width="19" height="19" viewBox="0 0 16 16" fill="#c4c5d8"><path d="M1.6 2.4 Q1.6 1.4 2.6 1.4 H10.6 L13 3.8 V6 L7.6 11.4 L7 13.6 H2.6 Q1.6 13.6 1.6 12.6 Z M3.4 3.2 V5.8 H10 V3.2 Z"/><circle cx="6.2" cy="10" r="1.6" fill="#353541"/><path d="M13.2 6.8 L15 8.6 L10 13.6 L7.8 14.2 L8.2 11.8 Z"/></svg>
<div class="a" style="left:1772.1px;top:30.1px;width:34.4px;height:34.4px;border-radius:50%;background:#353541"></div>
<svg class="a" style="left:1779.3px;top:37.4px;color:#c4c5d8;" width="20" height="20" viewBox="0 0 20 20" fill="#c4c5d8"><path fill="none" stroke="currentColor" stroke-width="2.9" d="M3.50 11.99 A6.8 6.8 0 0 1 4.72 5.72"/><path d="M6.68 1.02 L2.30 3.31 L6.68 7.11Z"/><path fill="none" stroke="currentColor" stroke-width="2.9" d="M8.01 3.50 A6.8 6.8 0 0 1 14.28 4.72"/><path d="M18.98 6.68 L16.69 2.30 L12.89 6.68Z"/><path fill="none" stroke="currentColor" stroke-width="2.9" d="M16.50 8.01 A6.8 6.8 0 0 1 15.28 14.28"/><path d="M13.32 18.98 L17.70 16.69 L13.32 12.89Z"/><path fill="none" stroke="currentColor" stroke-width="2.9" d="M11.99 16.50 A6.8 6.8 0 0 1 5.72 15.28"/><path d="M1.02 13.32 L3.31 17.70 L7.11 13.32Z"/></svg>
<div class="a" style="left:1815.1px;top:30.1px;width:34.4px;height:34.4px;border-radius:50%;background:#353541"></div>
<svg class="a" style="left:1822.3px;top:37.4px;color:#c4c5d8;" width="20" height="20" viewBox="0 0 20 20" fill="#c4c5d8"><path d="M1 5.6 Q1 4.6 2 4.6 H5 L6.4 2.6 H11.2 L12.4 4.6 H18 Q19 4.6 19 5.6 V15.6 Q19 16.6 18 16.6 H2 Q1 16.6 1 15.6 Z"/><circle cx="10.4" cy="10.6" r="3.5" fill="#353541"/><circle cx="4" cy="7" r="0.7" fill="#353541"/></svg>
<div class="a" style="left:1858.1px;top:30.1px;width:34.4px;height:34.4px;border-radius:50%;background:#353541"></div>
<svg class="a" style="left:1865.3px;top:37.4px;color:#c4c5d8;" width="20" height="20" viewBox="0 0 20 20" fill="#c4c5d8"><path d="M8 1.2 A6.6 6.4 0 0 1 14.6 7.6 A6.6 6.4 0 0 1 8 14 Q6.6 14 5.4 13.6 L1.2 15 L2.8 11.6 A6.4 6.4 0 0 1 8 1.2Z"/><path d="M14.9 8.2 A5.4 5.2 0 0 1 18 16.2 L19.2 19 L15.6 18 A5.4 5.2 0 0 1 9.2 14.8 A7.2 7 0 0 0 14.9 8.2Z"/><path fill="none" stroke="#353541" stroke-width="1.1" d="M14.9 8.2 A6.8 6.6 0 0 1 9.2 14.8"/><path fill="none" stroke="#353541" stroke-width="1.3" d="M6.2 5.6 Q6.2 3.8 8 3.8 Q9.8 3.8 9.8 5.4 Q9.8 6.5 8 7.2 V8.8"/><circle cx="8" cy="10.6" r="0.85" fill="#353541"/></svg>
<div class="a" style="left:1356px;top:77px;width:265px;height:867px;background:#282935;border-radius:6px;"></div>
<div class="a" style="left:1628px;top:77px;width:265px;height:867px;background:#282935;border-radius:6px;"></div>
<div class="a" style="left:1356px;top:952px;width:537px;height:27px;background:#3c3c57;border-radius:5px;"></div>
<svg class="a" style="left:1350.4px;top:916px" width="4" height="4"><circle cx="2" cy="2" r="1.3" fill="#8b8b95"/></svg>
<svg class="a" style="left:1350.4px;top:922.3px" width="4" height="4"><circle cx="2" cy="2" r="1.3" fill="#8b8b95"/></svg>
<svg class="a" style="left:1350.4px;top:928.6px" width="4" height="4"><circle cx="2" cy="2" r="1.3" fill="#8b8b95"/></svg>
<svg class="a" style="left:1622.5px;top:916px" width="4" height="4"><circle cx="2" cy="2" r="1.3" fill="#8b8b95"/></svg>
<svg class="a" style="left:1622.5px;top:922.3px" width="4" height="4"><circle cx="2" cy="2" r="1.3" fill="#8b8b95"/></svg>
<svg class="a" style="left:1622.5px;top:928.6px" width="4" height="4"><circle cx="2" cy="2" r="1.3" fill="#8b8b95"/></svg>
<div class="a" style="left:1366px;top:85px;width:196.5px;height:20px;background:#1f2029;border-radius:4px;"></div>
<svg class="a" style="left:1373.5px;top:91.5px;color:#d8d8d8;" width="9" height="9" viewBox="0 0 16 16" fill="#d8d8d8"><circle cx="6.5" cy="6.5" r="4.2" fill="none" stroke="currentColor" stroke-width="2"/><path d="M9.4 9.4 L14 14" stroke="currentColor" stroke-width="2.4" stroke-linecap="round"/></svg>
<div class="a t" style="left:1391px;top:91.49px;font-size:11px;color:#5d5e6b;font-weight:400;letter-spacing:-0.1px;">Search</div>
<div class="a" style="left:1573px;top:88px;width:16px;height:16px;border-radius:50%;background:#8c8c8e"></div>
<svg class="a" style="left:1573px;top:88px" width="16" height="16" viewBox="0 0 16 16"><path d="M4.4 6.6 L8 10 L11.6 6.6" fill="none" stroke="#45454c" stroke-width="1.1"/></svg>
<div class="a" style="left:1594.8px;top:88px;width:16px;height:16px;border-radius:50%;background:#8c8c8e"></div>
<svg class="a" style="left:1594.8px;top:88px" width="16" height="16" viewBox="0 0 16 16"><path d="M6.6 4.4 L10 8 L6.6 11.6" fill="none" stroke="#45454c" stroke-width="1.1"/></svg>
<div class="a" style="left:1366px;top:112px;width:245px;height:1.2px;background:#3e3f4b;border-radius:0px;"></div>
<div class="a" style="left:1366px;top:132px;width:245px;height:1.2px;background:#3e3f4b;border-radius:0px;"></div>
<div class="a" style="left:1366px;top:152px;width:245px;height:1.2px;background:#3e3f4b;border-radius:0px;"></div>
<div class="a" style="left:1366px;top:172px;width:245px;height:1.2px;background:#3e3f4b;border-radius:0px;"></div>
<div class="a" style="left:1366px;top:192px;width:245px;height:1.2px;background:#3e3f4b;border-radius:0px;"></div>
<div class="a" style="left:1366px;top:212px;width:245px;height:1.2px;background:#3e3f4b;border-radius:0px;"></div>
<div class="a" style="left:1366px;top:232px;width:245px;height:1.2px;background:#3e3f4b;border-radius:0px;"></div>
<div class="a" style="left:1366px;top:252px;width:245px;height:1.2px;background:#3e3f4b;border-radius:0px;"></div>
<div class="a" style="left:1366px;top:272px;width:245px;height:1.2px;background:#3e3f4b;border-radius:0px;"></div>
<div class="a" style="left:1366px;top:292px;width:245px;height:1.2px;background:#3e3f4b;border-radius:0px;"></div>
<div class="a" style="left:1366px;top:312px;width:245px;height:1.2px;background:#3e3f4b;border-radius:0px;"></div>
<div class="a" style="left:1366px;top:332px;width:245px;height:1.2px;background:#3e3f4b;border-radius:0px;"></div>
<div class="a" style="left:1366px;top:352px;width:245px;height:1.2px;background:#3e3f4b;border-radius:0px;"></div>
<div class="a" style="left:1366px;top:372px;width:245px;height:1.2px;background:#3e3f4b;border-radius:0px;"></div>
<div class="a" style="left:1366px;top:392px;width:245px;height:1.2px;background:#3e3f4b;border-radius:0px;"></div>
<div class="a" style="left:1366px;top:412px;width:245px;height:1.2px;background:#3e3f4b;border-radius:0px;"></div>
<div class="a" style="left:1366px;top:192.6px;width:245px;height:19.8px;background:#3c3e57;border-radius:2px;"></div>
<svg class="a" style="left:1370.8px;top:120.3px;color:#8c8c90;" width="10.5" height="5.7" viewBox="0 0 10.5 5.7" fill="#8c8c90"><path fill="none" stroke="currentColor" stroke-width="1.05" d="M0.4 0.4 L5.25 5.3 L10.1 0.4"/></svg>
<svg class="a" style="left:1386.5px;top:115.5px;color:#a6a7ad;" width="14" height="13" viewBox="0 0 14 13" fill="#a6a7ad"><path d="M7.5 1.7 L13.9 8.5 H0.6 Z"/><path d="M4.7 5.6 L8.6 10.5 H0.4 Z" stroke="#282935" stroke-width="0.9" paint-order="stroke"/></svg>
<div class="a t" style="left:1405.3px;top:117.74px;font-size:12px;color:#b3b4bc;font-weight:400;letter-spacing:-0.22px;">Terrain</div>
<svg class="a" style="left:1368.8px;top:135.5px;color:#8c8c90;" width="14" height="14" viewBox="0 0 16 16" fill="#8c8c90"><path d="M8 3 C4 3 1.5 6 0.8 8 C1.5 10 4 13 8 13 C12 13 14.5 10 15.2 8 C14.5 6 12 3 8 3Z"/><circle cx="8" cy="8" r="3" fill="#282935"/><circle cx="8" cy="8" r="1.8"/></svg>
<svg class="a" style="left:1390.7px;top:140.3px;color:#8c8c90;" width="10.5" height="5.7" viewBox="0 0 10.5 5.7" fill="#8c8c90"><path fill="none" stroke="currentColor" stroke-width="1.05" d="M0.4 0.4 L5.25 5.3 L10.1 0.4"/></svg>
<svg class="a" style="left:1406.9px;top:136.2px;color:#8c8c90;" width="12.5" height="12.5" viewBox="0 0 16 16" fill="#8c8c90"><path d="M0.5 14.5 Q8 11 15.5 14.5 Z"/><path d="M7 13 L8 6 L9 6 L9.4 13 Z"/><path d="M8.5 6 C6.5 3.5 4.5 4 3.5 5.5 C5 5 6.5 5.5 8.5 6Z M8.5 6 C9 3 11 2 12.5 3 C11 3.5 10 4.5 8.5 6Z M8.5 6 C10.5 5 12.5 6 13 8 C11.5 7 10.5 6.5 8.5 6Z"/><circle cx="3" cy="10.5" r="1.2"/><path d="M12 12.5 L12.4 9.5 L13 12.5Z"/></svg>
<div class="a t" style="left:1423.3px;top:137.74px;font-size:12px;color:#b3b4bc;font-weight:400;letter-spacing:-0.22px;">Biomes</div>
<svg class="a" style="left:1577.6px;top:136.3px;color:#8c8c90;" width="13" height="12.5" viewBox="0 0 16 16" fill="#8c8c90"><path d="M1 3 Q1 2 2 2 H6 L7.6 3.6 H12.6 Q13.6 3.6 13.6 4.6 V6 H4.2 Q3.2 6 2.9 7 L1 12.6 Z"/><path d="M3.6 7 H15.2 L13.2 14 H1.2 Z"/></svg>
<svg class="a" style="left:1595.8px;top:136.2px;color:#8c8c90;" width="12.4" height="12.4" viewBox="0 0 16 16" fill="#8c8c90"><circle cx="8" cy="8" r="7.5"/><path d="M6.9 3.6 H9.1 V6.9 H12.4 V9.1 H9.1 V12.4 H6.9 V9.1 H3.6 V6.9 H6.9 Z" fill="#282935"/></svg>
<svg class="a" style="left:1368.8px;top:155.5px;color:#8c8c90;" width="14" height="14" viewBox="0 0 16 16" fill="#8c8c90"><path d="M8 3 C4 3 1.5 6 0.8 8 C1.5 10 4 13 8 13 C12 13 14.5 10 15.2 8 C14.5 6 12 3 8 3Z"/><circle cx="8" cy="8" r="3" fill="#282935"/><circle cx="8" cy="8" r="1.8"/></svg>
<svg class="a" style="left:1408.8px;top:160.3px;color:#8c8c90;" width="10.5" height="5.7" viewBox="0 0 10.5 5.7" fill="#8c8c90"><path fill="none" stroke="currentColor" stroke-width="1.05" d="M0.4 0.4 L5.25 5.3 L10.1 0.4"/></svg>
<svg class="a" style="left:1441.1px;top:156.2px;color:#8c8c90;" width="12.5" height="12.5" viewBox="0 0 16 16" fill="#8c8c90"><path d="M0.5 14.5 Q8 11 15.5 14.5 Z"/><path d="M7 13 L8 6 L9 6 L9.4 13 Z"/><path d="M8.5 6 C6.5 3.5 4.5 4 3.5 5.5 C5 5 6.5 5.5 8.5 6Z M8.5 6 C9 3 11 2 12.5 3 C11 3.5 10 4.5 8.5 6Z M8.5 6 C10.5 5 12.5 6 13 8 C11.5 7 10.5 6.5 8.5 6Z"/><circle cx="3" cy="10.5" r="1.2"/><path d="M12 12.5 L12.4 9.5 L13 12.5Z"/></svg>
<div class="a" style="left:1424.6px;top:155.9px;width:8.6px;height:13.6px;background:#1ff20f;border-radius:4px;box-shadow:0 0 0 1px #0a3a08"></div>
<div class="a t" style="left:1457.1px;top:157.74px;font-size:12px;color:#b3b4bc;font-weight:400;letter-spacing:-0.22px;">Global</div>
<svg class="a" style="left:1595.8px;top:155px;color:#8c8c90;" width="12.4" height="13" viewBox="0 0 12.4 13" fill="#8c8c90"><path d="M6 4.5 L11.2 7.2 L6 9.9 L0.8 7.2 Z"/><path d="M2.2 9.2 L6 11.2 L9.8 9.2 L11.2 10 L6 12.7 L0.8 10 Z"/><path d="M9.5 0.6 L10.3 2.4 L12.1 3.2 L10.3 4 L9.5 5.8 L8.7 4 L6.9 3.2 L8.7 2.4Z"/></svg>
<svg class="a" style="left:1368.8px;top:175.5px;color:#8c8c90;" width="14" height="14" viewBox="0 0 16 16" fill="#8c8c90"><path d="M8 3 C4 3 1.5 6 0.8 8 C1.5 10 4 13 8 13 C12 13 14.5 10 15.2 8 C14.5 6 12 3 8 3Z"/><circle cx="8" cy="8" r="3" fill="#282935"/><circle cx="8" cy="8" r="1.8"/></svg>
<svg class="a" style="left:1426.8px;top:180.3px;color:#8c8c90;" width="10.5" height="5.7" viewBox="0 0 10.5 5.7" fill="#8c8c90"><path fill="none" stroke="currentColor" stroke-width="1.05" d="M0.4 0.4 L5.25 5.3 L10.1 0.4"/></svg>
<svg class="a" style="left:1443.0px;top:176.2px;color:#8c8c90;" width="12.5" height="12.5" viewBox="0 0 16 16" fill="#8c8c90"><path d="M0.8 1.8 H15.2 V3.4 L9.8 9.2 V14.8 L6.2 13 V9.2 L0.8 3.4 Z"/></svg>
<div class="a t" style="left:1459.5px;top:177.74px;font-size:12px;color:#b3b4bc;font-weight:400;letter-spacing:-0.22px;">Filters</div>
<svg class="a" style="left:1577.6px;top:176.3px;color:#8c8c90;" width="13" height="12.5" viewBox="0 0 16 16" fill="#8c8c90"><path d="M1 3 Q1 2 2 2 H6 L7.6 3.6 H12.6 Q13.6 3.6 13.6 4.6 V6 H4.2 Q3.2 6 2.9 7 L1 12.6 Z"/><path d="M3.6 7 H15.2 L13.2 14 H1.2 Z"/></svg>
<svg class="a" style="left:1595.8px;top:176.2px;color:#8c8c90;" width="12.4" height="12.4" viewBox="0 0 16 16" fill="#8c8c90"><circle cx="8" cy="8" r="7.5"/><path d="M6.9 3.6 H9.1 V6.9 H12.4 V9.1 H9.1 V12.4 H6.9 V9.1 H3.6 V6.9 H6.9 Z" fill="#282935"/></svg>
<svg class="a" style="left:1368.8px;top:195.5px;color:#8c8c90;" width="14" height="14" viewBox="0 0 16 16" fill="#8c8c90"><path d="M8 3 C4 3 1.5 6 0.8 8 C1.5 10 4 13 8 13 C12 13 14.5 10 15.2 8 C14.5 6 12 3 8 3Z"/><circle cx="8" cy="8" r="3" fill="#282935"/><circle cx="8" cy="8" r="1.8"/></svg>
<svg class="a" style="left:1447.2px;top:197.25px;color:#8c8c90;" width="5.7" height="10.5" viewBox="0 0 5.7 10.5" fill="#8c8c90"><path fill="none" stroke="currentColor" stroke-width="1.05" d="M0.4 0.4 L5.3 5.25 L0.4 10.1"/></svg>
<svg class="a" style="left:1460.6px;top:196.2px;color:#8c8c90;" width="12.5" height="12.5" viewBox="0 0 16 16" fill="#8c8c90"><path d="M0.8 1.8 H15.2 V3.4 L9.8 9.2 V14.8 L6.2 13 V9.2 L0.8 3.4 Z"/></svg>
<div class="a t" style="left:1477.0px;top:197.74px;font-size:12px;color:#b3b4bc;font-weight:400;letter-spacing:-0.22px;">General - Flatten</div>
<svg class="a" style="left:1595.6px;top:196.2px;color:#8c8c90;" width="12.4" height="12.4" viewBox="0 0 16 16" fill="#8c8c90"><path fill="none" stroke="currentColor" stroke-width="1.6" d="M13.2 6.5 A5.4 5.4 0 0 0 3.2 5.2 M2.8 9.5 A5.4 5.4 0 0 0 12.8 10.8"/><path d="M14.6 2.6 V7.6 H9.6 Z M1.4 13.4 V8.4 H6.4 Z"/></svg>
<svg class="a" style="left:1368.8px;top:215.5px;color:#8c8c90;" width="14" height="14" viewBox="0 0 16 16" fill="#8c8c90"><path d="M8 3 C4 3 1.5 6 0.8 8 C1.5 10 4 13 8 13 C12 13 14.5 10 15.2 8 C14.5 6 12 3 8 3Z"/><circle cx="8" cy="8" r="3" fill="#282935"/><circle cx="8" cy="8" r="1.8"/></svg>
<svg class="a" style="left:1426.8px;top:220.3px;color:#8c8c90;" width="10.5" height="5.7" viewBox="0 0 10.5 5.7" fill="#8c8c90"><path fill="none" stroke="currentColor" stroke-width="1.05" d="M0.4 0.4 L5.25 5.3 L10.1 0.4"/></svg>
<svg class="a" style="left:1443.6px;top:217.0px;color:#8c8c90;" width="11" height="12" viewBox="0 0 11 12" fill="#8c8c90"><path d="M5.5 0.2 L10.8 3 V9 L5.5 11.8 L0.2 9 V3 Z"/><path fill="none" stroke="#282935" stroke-width="0.75" d="M0.2 4.6 L5.5 7.3 L10.8 4.6 M0.2 6.5 L5.5 9.2 L10.8 6.5 M0.2 8.4 L5.5 11.1 L10.8 8.4 M5.5 0.2 V4.2 M3 1.4 V3.4 M8 1.4 V3.4"/></svg>
<div class="a t" style="left:1459.5px;top:217.74px;font-size:12px;color:#b3b4bc;font-weight:400;letter-spacing:-0.22px;">Materials</div>
<svg class="a" style="left:1577.6px;top:216.3px;color:#8c8c90;" width="13" height="12.5" viewBox="0 0 16 16" fill="#8c8c90"><path d="M1 3 Q1 2 2 2 H6 L7.6 3.6 H12.6 Q13.6 3.6 13.6 4.6 V6 H4.2 Q3.2 6 2.9 7 L1 12.6 Z"/><path d="M3.6 7 H15.2 L13.2 14 H1.2 Z"/></svg>
<svg class="a" style="left:1595.8px;top:216.2px;color:#8c8c90;" width="12.4" height="12.4" viewBox="0 0 16 16" fill="#8c8c90"><circle cx="8" cy="8" r="7.5"/><path d="M6.9 3.6 H9.1 V6.9 H12.4 V9.1 H9.1 V12.4 H6.9 V9.1 H3.6 V6.9 H6.9 Z" fill="#282935"/></svg>
<svg class="a" style="left:1368.8px;top:235.5px;color:#8c8c90;" width="14" height="14" viewBox="0 0 16 16" fill="#8c8c90"><path d="M8 3 C4 3 1.5 6 0.8 8 C1.5 10 4 13 8 13 C12 13 14.5 10 15.2 8 C14.5 6 12 3 8 3Z"/><circle cx="8" cy="8" r="3" fill="#282935"/><circle cx="8" cy="8" r="1.8"/></svg>
<svg class="a" style="left:1447.2px;top:237.25px;color:#8c8c90;" width="5.7" height="10.5" viewBox="0 0 5.7 10.5" fill="#8c8c90"><path fill="none" stroke="currentColor" stroke-width="1.05" d="M0.4 0.4 L5.3 5.25 L0.4 10.1"/></svg>
<svg class="a" style="left:1461.7px;top:237.0px;color:#8c8c90;" width="11" height="12" viewBox="0 0 11 12" fill="#8c8c90"><path d="M5.5 0.2 L10.8 3 V9 L5.5 11.8 L0.2 9 V3 Z"/><path fill="none" stroke="#282935" stroke-width="0.75" d="M0.2 4.6 L5.5 7.3 L10.8 4.6 M0.2 6.5 L5.5 9.2 L10.8 6.5 M0.2 8.4 L5.5 11.1 L10.8 8.4 M5.5 0.2 V4.2 M3 1.4 V3.4 M8 1.4 V3.4"/></svg>
<div class="a t" style="left:1477.0px;top:237.74px;font-size:12px;color:#b3b4bc;font-weight:400;letter-spacing:-0.22px;">Color</div>
<svg class="a" style="left:1595.6px;top:236.2px;color:#8c8c90;" width="12.4" height="12.4" viewBox="0 0 16 16" fill="#8c8c90"><path fill="none" stroke="currentColor" stroke-width="1.6" d="M13.2 6.5 A5.4 5.4 0 0 0 3.2 5.2 M2.8 9.5 A5.4 5.4 0 0 0 12.8 10.8"/><path d="M14.6 2.6 V7.6 H9.6 Z M1.4 13.4 V8.4 H6.4 Z"/></svg>
<div class="a" style="left:1540px;top:235.9px;width:50px;height:14px;background:#ffffff;border-radius:3px;"></div>
<svg class="a" style="left:1368.8px;top:255.5px;color:#8c8c90;" width="14" height="14" viewBox="0 0 16 16" fill="#8c8c90"><path d="M8 3 C4 3 1.5 6 0.8 8 C1.5 10 4 13 8 13 C12 13 14.5 10 15.2 8 C14.5 6 12 3 8 3Z"/><circle cx="8" cy="8" r="3" fill="#282935"/><circle cx="8" cy="8" r="1.8"/></svg>
<svg class="a" style="left:1406.8px;top:256.2px;color:#8c8c90;" width="12.5" height="12.5" viewBox="0 0 16 16" fill="#8c8c90"><path d="M8 1 L15.5 4.6 L8 8.2 L0.5 4.6 Z"/><path d="M2.4 6.9 L8 9.6 L13.6 6.9 L15.5 7.8 L8 11.4 L0.5 7.8 Z"/><path d="M2.4 10.1 L8 12.8 L13.6 10.1 L15.5 11 L8 14.6 L0.5 11 Z"/></svg>
<div class="a t" style="left:1423.2px;top:257.74px;font-size:12px;color:#b3b4bc;font-weight:400;letter-spacing:-0.22px;">Biome Layers</div>
<svg class="a" style="left:1577.6px;top:256.3px;color:#8c8c90;" width="13" height="12.5" viewBox="0 0 16 16" fill="#8c8c90"><path d="M1 3 Q1 2 2 2 H6 L7.6 3.6 H12.6 Q13.6 3.6 13.6 4.6 V6 H4.2 Q3.2 6 2.9 7 L1 12.6 Z"/><path d="M3.6 7 H15.2 L13.2 14 H1.2 Z"/></svg>
<svg class="a" style="left:1595.8px;top:256.2px;color:#8c8c90;" width="12.4" height="12.4" viewBox="0 0 16 16" fill="#8c8c90"><circle cx="8" cy="8" r="7.5"/><path d="M6.9 3.6 H9.1 V6.9 H12.4 V9.1 H9.1 V12.4 H6.9 V9.1 H3.6 V6.9 H6.9 Z" fill="#282935"/></svg>
<svg class="a" style="left:1368.8px;top:275.5px;color:#8c8c90;" width="14" height="14" viewBox="0 0 16 16" fill="#8c8c90"><path d="M8 3 C4 3 1.5 6 0.8 8 C1.5 10 4 13 8 13 C12 13 14.5 10 15.2 8 C14.5 6 12 3 8 3Z"/><circle cx="8" cy="8" r="3" fill="#282935"/><circle cx="8" cy="8" r="1.8"/></svg>
<svg class="a" style="left:1406.8px;top:276.2px;color:#8c8c90;" width="12.5" height="12.5" viewBox="0 0 16 16" fill="#8c8c90"><path d="M5.6 4 L10 9.6 L11.4 7.6 L15.6 13.6 H0.4 Z"/></svg>
<div class="a t" style="left:1423.0px;top:277.74px;font-size:12px;color:#b3b4bc;font-weight:400;letter-spacing:-0.22px;">Shape Layers</div>
<svg class="a" style="left:1577.6px;top:276.3px;color:#8c8c90;" width="13" height="12.5" viewBox="0 0 16 16" fill="#8c8c90"><path d="M1 3 Q1 2 2 2 H6 L7.6 3.6 H12.6 Q13.6 3.6 13.6 4.6 V6 H4.2 Q3.2 6 2.9 7 L1 12.6 Z"/><path d="M3.6 7 H15.2 L13.2 14 H1.2 Z"/></svg>
<svg class="a" style="left:1595.8px;top:276.2px;color:#8c8c90;" width="12.4" height="12.4" viewBox="0 0 16 16" fill="#8c8c90"><circle cx="8" cy="8" r="7.5"/><path d="M6.9 3.6 H9.1 V6.9 H12.4 V9.1 H9.1 V12.4 H6.9 V9.1 H3.6 V6.9 H6.9 Z" fill="#282935"/></svg>
<svg class="a" style="left:1368.8px;top:295.5px;color:#8c8c90;" width="14" height="14" viewBox="0 0 16 16" fill="#8c8c90"><path d="M8 3 C4 3 1.5 6 0.8 8 C1.5 10 4 13 8 13 C12 13 14.5 10 15.2 8 C14.5 6 12 3 8 3Z"/><circle cx="8" cy="8" r="3" fill="#282935"/><circle cx="8" cy="8" r="1.8"/></svg>
<svg class="a" style="left:1406.8px;top:296.2px;color:#8c8c90;" width="12.5" height="12.5" viewBox="0 0 16 16" fill="#8c8c90"><path d="M15 1 C13.5 1 9.5 5.5 7.5 8 L9 9.5 C11.5 7.5 15 3.5 15 1Z"/><path d="M6.6 9 L8.2 10.6 C7.8 13 5.5 15 1 15 C2.6 13.6 2.4 11.6 3.6 10.4 C4.4 9.6 5.6 9.2 6.6 9Z"/></svg>
<div class="a t" style="left:1423.2px;top:297.74px;font-size:12px;color:#b3b4bc;font-weight:400;letter-spacing:-0.22px;">Mask Layers</div>
<svg class="a" style="left:1577.6px;top:296.3px;color:#8c8c90;" width="13" height="12.5" viewBox="0 0 16 16" fill="#8c8c90"><path d="M1 3 Q1 2 2 2 H6 L7.6 3.6 H12.6 Q13.6 3.6 13.6 4.6 V6 H4.2 Q3.2 6 2.9 7 L1 12.6 Z"/><path d="M3.6 7 H15.2 L13.2 14 H1.2 Z"/></svg>
<svg class="a" style="left:1595.8px;top:296.2px;color:#8c8c90;" width="12.4" height="12.4" viewBox="0 0 16 16" fill="#8c8c90"><circle cx="8" cy="8" r="7.5"/><path d="M6.9 3.6 H9.1 V6.9 H12.4 V9.1 H9.1 V12.4 H6.9 V9.1 H3.6 V6.9 H6.9 Z" fill="#282935"/></svg>
<svg class="a" style="left:1368.8px;top:315.5px;color:#8c8c90;" width="14" height="14" viewBox="0 0 16 16" fill="#8c8c90"><path d="M8 3 C4 3 1.5 6 0.8 8 C1.5 10 4 13 8 13 C12 13 14.5 10 15.2 8 C14.5 6 12 3 8 3Z"/><circle cx="8" cy="8" r="3" fill="#282935"/><circle cx="8" cy="8" r="1.8"/></svg>
<svg class="a" style="left:1406.8px;top:316.2px;color:#8c8c90;" width="12.5" height="12.5" viewBox="0 0 16 16" fill="#8c8c90"><circle cx="8" cy="3" r="1.8"/><circle cx="5" cy="8" r="1.8"/><circle cx="11" cy="8" r="1.8"/><circle cx="2.5" cy="13" r="1.8"/><circle cx="8" cy="13" r="1.8"/><circle cx="13.5" cy="13" r="1.8"/></svg>
<div class="a t" style="left:1423.0px;top:317.74px;font-size:12px;color:#b3b4bc;font-weight:400;letter-spacing:-0.22px;">Simulation Layers</div>
<svg class="a" style="left:1577.6px;top:316.3px;color:#8c8c90;" width="13" height="12.5" viewBox="0 0 16 16" fill="#8c8c90"><path d="M1 3 Q1 2 2 2 H6 L7.6 3.6 H12.6 Q13.6 3.6 13.6 4.6 V6 H4.2 Q3.2 6 2.9 7 L1 12.6 Z"/><path d="M3.6 7 H15.2 L13.2 14 H1.2 Z"/></svg>
<svg class="a" style="left:1595.8px;top:316.2px;color:#8c8c90;" width="12.4" height="12.4" viewBox="0 0 16 16" fill="#8c8c90"><circle cx="8" cy="8" r="7.5"/><path d="M6.9 3.6 H9.1 V6.9 H12.4 V9.1 H9.1 V12.4 H6.9 V9.1 H3.6 V6.9 H6.9 Z" fill="#282935"/></svg>
<svg class="a" style="left:1372.6000000000001px;top:337.25px;color:#8c8c90;" width="5.7" height="10.5" viewBox="0 0 5.7 10.5" fill="#8c8c90"><path fill="none" stroke="currentColor" stroke-width="1.05" d="M0.4 0.4 L5.3 5.25 L0.4 10.1"/></svg>
<svg class="a" style="left:1386.6px;top:335.5px;color:#8c8c90;" width="14" height="14" viewBox="0 0 16 16" fill="#8c8c90"><rect x="0.5" y="3.5" width="10.5" height="9" rx="1.6"/><path d="M11.5 7 L15.5 4 V12 L11.5 9 Z"/></svg>
<div class="a t" style="left:1405.2px;top:337.74px;font-size:12px;color:#b3b4bc;font-weight:400;letter-spacing:-0.22px;">Scene</div>
<svg class="a" style="left:1388.0px;top:356.2px;color:#8c8c90;" width="12.5" height="12.5" viewBox="0 0 16 16" fill="#8c8c90"><path d="M6.6 1 H9.4 V7 H12.6 L8 11.6 L3.4 7 H6.6 Z"/><rect x="1.5" y="13" width="13" height="1.8"/></svg>
<div class="a t" style="left:1405.2px;top:357.74px;font-size:12px;color:#b3b4bc;font-weight:400;letter-spacing:-0.22px;">Export</div>
<svg class="a" style="left:1595.8px;top:356.2px;color:#8c8c90;" width="12.4" height="12.4" viewBox="0 0 16 16" fill="#8c8c90"><circle cx="8" cy="8" r="7.5"/><path d="M6.9 3.6 H9.1 V6.9 H12.4 V9.1 H9.1 V12.4 H6.9 V9.1 H3.6 V6.9 H6.9 Z" fill="#282935"/></svg>
<svg class="a" style="left:1372.6000000000001px;top:377.25px;color:#8c8c90;" width="5.7" height="10.5" viewBox="0 0 5.7 10.5" fill="#8c8c90"><path fill="none" stroke="currentColor" stroke-width="1.05" d="M0.4 0.4 L5.3 5.25 L0.4 10.1"/></svg>
<svg class="a" style="left:1386.8px;top:375.5px;color:#8c8c90;" width="14" height="14" viewBox="0 0 16 16" fill="#8c8c90"><path d="M8 0.8 L10.2 5.6 L15.4 6 L11.4 9.4 L12.7 14.6 L8 11.8 L3.3 14.6 L4.6 9.4 L0.6 6 L5.8 5.6 Z"/></svg>
<div class="a t" style="left:1405.2px;top:377.74px;font-size:12px;color:#b3b4bc;font-weight:400;letter-spacing:-0.22px;">Presets</div>
<svg class="a" style="left:1372.6000000000001px;top:397.25px;color:#8c8c90;" width="5.7" height="10.5" viewBox="0 0 5.7 10.5" fill="#8c8c90"><path fill="none" stroke="currentColor" stroke-width="1.05" d="M0.4 0.4 L5.3 5.25 L0.4 10.1"/></svg>
<svg class="a" style="left:1387.2px;top:396.2px;color:#8c8c90;" width="12.5" height="12.5" viewBox="0 0 16 16" fill="#8c8c90"><path fill="none" stroke="currentColor" stroke-width="1.2" d="M8 2.2 L9.2 1.2 L10.2 2.8 L12 2.4 L12.2 4.2 L13.8 5 L13 6.6 L14 8 L13 9.4 L13.8 11 L12.2 11.8 L12 13.6 L10.2 13.2 L9.2 14.8 L8 13.8 L6.8 14.8 L5.8 13.2 L4 13.6 L3.8 11.8 L2.2 11 L3 9.4 L2 8 L3 6.6 L2.2 5 L3.8 4.2 L4 2.4 L5.8 2.8 L6.8 1.2 Z"/><circle cx="8" cy="8" r="2.6" fill="none" stroke="currentColor" stroke-width="1.2"/></svg>
<div class="a t" style="left:1405.2px;top:397.74px;font-size:12px;color:#b3b4bc;font-weight:400;letter-spacing:-0.22px;">Options</div>
<svg class="a" style="left:1638px;top:89.8px;color:#a9aab0;" width="14.2" height="12.5" viewBox="0 0 16 16" fill="#a9aab0"><path d="M0.8 1.8 H15.2 V3.4 L9.8 9.2 V14.8 L6.2 13 V9.2 L0.8 3.4 Z"/></svg>
<div class="a t" style="left:1657.9px;top:89.94px;font-size:12px;color:#a4a5ad;font-weight:400;letter-spacing:-0.18px;">General - Flatten Settings</div>
<svg class="a" style="left:1867px;top:88px;color:#8b8b8f;" width="16" height="16" viewBox="0 0 16 16" fill="#8b8b8f"><circle cx="8" cy="8" r="7.5"/><circle cx="8" cy="8" r="5.6" fill="#282935"/><circle cx="8" cy="8" r="4.6"/><rect x="7.2" y="6.8" width="1.6" height="4.4" fill="#282935"/><circle cx="8" cy="5.2" r="0.9" fill="#282935"/></svg>
<div class="a" style="left:1638px;top:110px;width:245px;height:2px;background:#454655;border-radius:0px;"></div>
<svg class="a" style="left:1638.9px;top:140.8px;color:#9d9ea6;" width="8.4" height="4.6" viewBox="0 0 10.5 5.7" fill="#9d9ea6"><path fill="none" stroke="currentColor" stroke-width="1.05" d="M0.4 0.4 L5.25 5.3 L10.1 0.4"/></svg>
<div class="a t" style="left:1657.5px;top:133.93px;font-size:15.2px;color:#ffffff;font-weight:700;letter-spacing:-0.05px;">Presets</div>
<div class="a" style="left:1638px;top:171px;width:112px;height:36px;background:#22222e;border-radius:6px;border-top-right-radius:0;border-bottom-right-radius:0"></div>
<div class="a" style="left:1753px;top:171px;width:129.5px;height:36px;background:#22222e;border-radius:6px;border-top-left-radius:0;border-bottom-left-radius:0"></div>
<div class="a t" style="left:1645.5px;top:185.49px;font-size:11px;color:#f2f2f2;font-weight:400;letter-spacing:-0.3px;">Load Preset</div>
<div class="a t" style="left:1762px;top:185.49px;font-size:11px;color:#f2f2f2;font-weight:400;letter-spacing:-0.35px;">Select...</div>
<svg class="a" style="left:1859.8px;top:188px;color:#b6b6bb;" width="10" height="5.5" viewBox="0 0 10.5 5.7" fill="#b6b6bb"><path fill="none" stroke="currentColor" stroke-width="1.05" d="M0.4 0.4 L5.25 5.3 L10.1 0.4"/></svg>
<div class="a" style="left:1638px;top:239px;width:245px;height:1.6px;background:#3c3d4a;border-radius:0px;"></div>
<svg class="a" style="left:1638.9px;top:268.9px;color:#9d9ea6;" width="8.4" height="4.6" viewBox="0 0 10.5 5.7" fill="#9d9ea6"><path fill="none" stroke="currentColor" stroke-width="1.05" d="M0.4 0.4 L5.25 5.3 L10.1 0.4"/></svg>
<div class="a t" style="left:1657.7px;top:263.33px;font-size:15.2px;color:#ffffff;font-weight:700;letter-spacing:0.25px;">Level Step Strengths</div>
<div class="a" style="left:1638.2px;top:299.8px;width:244px;height:139px;background:#22222e;border-radius:8px;"></div>
<div class="a" style="left:1646px;top:315.9px;width:229px;height:1px;background:#3d3e4a;border-radius:0px;"></div>
<div class="a" style="left:1646px;top:338.8px;width:229px;height:1px;background:#3d3e4a;border-radius:0px;"></div>
<div class="a" style="left:1646px;top:361.1px;width:229px;height:1px;background:#3d3e4a;border-radius:0px;"></div>
<div class="a" style="left:1646px;top:383.7px;width:229px;height:1px;background:#3d3e4a;border-radius:0px;"></div>
<div class="a" style="left:1646px;top:405.9px;width:229px;height:1.2px;background:#5a5b66;border-radius:0px;"></div>
<div class="a" style="left:1649.0px;top:397.4px;width:13.1px;height:8.4px;background:#8e8e8e;border-radius:0px;border-radius:3px 3px 0 0"></div>
<div class="a t" style="left:1644.0px;top:413.74px;width:23.1px;text-align:center;font-size:10px;color:#a5a5aa;letter-spacing:-0.3px">1</div>
<svg class="a" style="left:1649.6px;top:423.6px;color:#a2a2a6;" width="12" height="11" viewBox="0 0 16 16" fill="#a2a2a6"><path d="M8 3 C4 3 1.5 6 0.8 8 C1.5 10 4 13 8 13 C12 13 14.5 10 15.2 8 C14.5 6 12 3 8 3Z"/><circle cx="8" cy="8" r="3" fill="#282935"/><circle cx="8" cy="8" r="1.8"/></svg>
<div class="a" style="left:1668.1px;top:397.4px;width:13.1px;height:8.4px;background:#8e8e8e;border-radius:0px;border-radius:3px 3px 0 0"></div>
<div class="a t" style="left:1663.1px;top:413.74px;width:23.1px;text-align:center;font-size:10px;color:#a5a5aa;letter-spacing:-0.3px">2</div>
<svg class="a" style="left:1668.6999999999998px;top:423.6px;color:#a2a2a6;" width="12" height="11" viewBox="0 0 16 16" fill="#a2a2a6"><path d="M8 3 C4 3 1.5 6 0.8 8 C1.5 10 4 13 8 13 C12 13 14.5 10 15.2 8 C14.5 6 12 3 8 3Z"/><circle cx="8" cy="8" r="3" fill="#282935"/><circle cx="8" cy="8" r="1.8"/></svg>
<div class="a" style="left:1687.2px;top:314.6px;width:13.1px;height:91.6px;background:#3d3f59;border-radius:0px;"></div>
<div class="a" style="left:1687.2px;top:306px;width:13.1px;height:8.6px;background:#8e8e8e;border-radius:0px;border-radius:3px 3px 0 0"></div>
<div class="a t" style="left:1682.2px;top:413.74px;width:23.1px;text-align:center;font-size:10px;color:#a5a5aa;letter-spacing:-0.3px">3</div>
<svg class="a" style="left:1687.8px;top:423.6px;color:#a2a2a6;" width="12" height="11" viewBox="0 0 16 16" fill="#a2a2a6"><path d="M8 3 C4 3 1.5 6 0.8 8 C1.5 10 4 13 8 13 C12 13 14.5 10 15.2 8 C14.5 6 12 3 8 3Z"/><circle cx="8" cy="8" r="3" fill="#282935"/><circle cx="8" cy="8" r="1.8"/></svg>
<div class="a" style="left:1706.3px;top:314.6px;width:13.1px;height:91.6px;background:#3d3f59;border-radius:0px;"></div>
<div class="a" style="left:1706.3px;top:306px;width:13.1px;height:8.6px;background:#8e8e8e;border-radius:0px;border-radius:3px 3px 0 0"></div>
<div class="a t" style="left:1701.3px;top:413.74px;width:23.1px;text-align:center;font-size:10px;color:#a5a5aa;letter-spacing:-0.3px">4</div>
<svg class="a" style="left:1706.8999999999999px;top:423.6px;color:#a2a2a6;" width="12" height="11" viewBox="0 0 16 16" fill="#a2a2a6"><path d="M8 3 C4 3 1.5 6 0.8 8 C1.5 10 4 13 8 13 C12 13 14.5 10 15.2 8 C14.5 6 12 3 8 3Z"/><circle cx="8" cy="8" r="3" fill="#282935"/><circle cx="8" cy="8" r="1.8"/></svg>
<div class="a" style="left:1725.4px;top:314.6px;width:13.1px;height:91.6px;background:#3d3f59;border-radius:0px;"></div>
<div class="a" style="left:1725.4px;top:306px;width:13.1px;height:8.6px;background:#8e8e8e;border-radius:0px;border-radius:3px 3px 0 0"></div>
<div class="a t" style="left:1720.4px;top:413.74px;width:23.1px;text-align:center;font-size:10px;color:#a5a5aa;letter-spacing:-0.3px">5</div>
<svg class="a" style="left:1726.0px;top:423.6px;color:#a2a2a6;" width="12" height="11" viewBox="0 0 16 16" fill="#a2a2a6"><path d="M8 3 C4 3 1.5 6 0.8 8 C1.5 10 4 13 8 13 C12 13 14.5 10 15.2 8 C14.5 6 12 3 8 3Z"/><circle cx="8" cy="8" r="3" fill="#282935"/><circle cx="8" cy="8" r="1.8"/></svg>
<div class="a" style="left:1744.5px;top:314.6px;width:13.1px;height:91.6px;background:#3d3f59;border-radius:0px;"></div>
<div class="a" style="left:1744.5px;top:306px;width:13.1px;height:8.6px;background:#8e8e8e;border-radius:0px;border-radius:3px 3px 0 0"></div>
<div class="a t" style="left:1739.5px;top:413.74px;width:23.1px;text-align:center;font-size:10px;color:#a5a5aa;letter-spacing:-0.3px">6</div>
<svg class="a" style="left:1745.1px;top:423.6px;color:#a2a2a6;" width="12" height="11" viewBox="0 0 16 16" fill="#a2a2a6"><path d="M8 3 C4 3 1.5 6 0.8 8 C1.5 10 4 13 8 13 C12 13 14.5 10 15.2 8 C14.5 6 12 3 8 3Z"/><circle cx="8" cy="8" r="3" fill="#282935"/><circle cx="8" cy="8" r="1.8"/></svg>
<div class="a" style="left:1763.6px;top:314.6px;width:13.1px;height:91.6px;background:#3d3f59;border-radius:0px;"></div>
<div class="a" style="left:1763.6px;top:306px;width:13.1px;height:8.6px;background:#8e8e8e;border-radius:0px;border-radius:3px 3px 0 0"></div>
<div class="a t" style="left:1758.6px;top:413.74px;width:23.1px;text-align:center;font-size:10px;color:#a5a5aa;letter-spacing:-0.3px">7</div>
<svg class="a" style="left:1764.1999999999998px;top:423.6px;color:#a2a2a6;" width="12" height="11" viewBox="0 0 16 16" fill="#a2a2a6"><path d="M8 3 C4 3 1.5 6 0.8 8 C1.5 10 4 13 8 13 C12 13 14.5 10 15.2 8 C14.5 6 12 3 8 3Z"/><circle cx="8" cy="8" r="3" fill="#282935"/><circle cx="8" cy="8" r="1.8"/></svg>
<div class="a" style="left:1782.7px;top:314.6px;width:13.1px;height:91.6px;background:#3d3f59;border-radius:0px;"></div>
<div class="a" style="left:1782.7px;top:306px;width:13.1px;height:8.6px;background:#8e8e8e;border-radius:0px;border-radius:3px 3px 0 0"></div>
<div class="a t" style="left:1777.7px;top:413.74px;width:23.1px;text-align:center;font-size:10px;color:#a5a5aa;letter-spacing:-0.3px">8</div>
<svg class="a" style="left:1783.3px;top:423.6px;color:#a2a2a6;" width="12" height="11" viewBox="0 0 16 16" fill="#a2a2a6"><path d="M8 3 C4 3 1.5 6 0.8 8 C1.5 10 4 13 8 13 C12 13 14.5 10 15.2 8 C14.5 6 12 3 8 3Z"/><circle cx="8" cy="8" r="3" fill="#282935"/><circle cx="8" cy="8" r="1.8"/></svg>
<div class="a" style="left:1801.8px;top:314.6px;width:13.1px;height:91.6px;background:#3d3f59;border-radius:0px;"></div>
<div class="a" style="left:1801.8px;top:306px;width:13.1px;height:8.6px;background:#8e8e8e;border-radius:0px;border-radius:3px 3px 0 0"></div>
<div class="a t" style="left:1796.8px;top:413.74px;width:23.1px;text-align:center;font-size:10px;color:#a5a5aa;letter-spacing:-0.3px">9</div>
<svg class="a" style="left:1802.3999999999999px;top:423.6px;color:#a2a2a6;" width="12" height="11" viewBox="0 0 16 16" fill="#a2a2a6"><path d="M8 3 C4 3 1.5 6 0.8 8 C1.5 10 4 13 8 13 C12 13 14.5 10 15.2 8 C14.5 6 12 3 8 3Z"/><circle cx="8" cy="8" r="3" fill="#282935"/><circle cx="8" cy="8" r="1.8"/></svg>
<div class="a" style="left:1820.9px;top:314.6px;width:13.1px;height:91.6px;background:#3d3f59;border-radius:0px;"></div>
<div class="a" style="left:1820.9px;top:306px;width:13.1px;height:8.6px;background:#8e8e8e;border-radius:0px;border-radius:3px 3px 0 0"></div>
<div class="a t" style="left:1815.9px;top:413.74px;width:23.1px;text-align:center;font-size:10px;color:#a5a5aa;letter-spacing:-0.3px">10</div>
<svg class="a" style="left:1821.5px;top:423.6px;color:#a2a2a6;" width="12" height="11" viewBox="0 0 16 16" fill="#a2a2a6"><path d="M8 3 C4 3 1.5 6 0.8 8 C1.5 10 4 13 8 13 C12 13 14.5 10 15.2 8 C14.5 6 12 3 8 3Z"/><circle cx="8" cy="8" r="3" fill="#282935"/><circle cx="8" cy="8" r="1.8"/></svg>
<div class="a" style="left:1840.0px;top:314.6px;width:13.1px;height:91.6px;background:#3d3f59;border-radius:0px;"></div>
<div class="a" style="left:1840.0px;top:306px;width:13.1px;height:8.6px;background:#8e8e8e;border-radius:0px;border-radius:3px 3px 0 0"></div>
<div class="a t" style="left:1835.0px;top:413.74px;width:23.1px;text-align:center;font-size:10px;color:#a5a5aa;letter-spacing:-0.3px">11</div>
<svg class="a" style="left:1840.6px;top:423.6px;color:#a2a2a6;" width="12" height="11" viewBox="0 0 16 16" fill="#a2a2a6"><path d="M8 3 C4 3 1.5 6 0.8 8 C1.5 10 4 13 8 13 C12 13 14.5 10 15.2 8 C14.5 6 12 3 8 3Z"/><circle cx="8" cy="8" r="3" fill="#282935"/><circle cx="8" cy="8" r="1.8"/></svg>
<div class="a" style="left:1859.1px;top:314.6px;width:13.1px;height:91.6px;background:#3d3f59;border-radius:0px;"></div>
<div class="a" style="left:1859.1px;top:306px;width:13.1px;height:8.6px;background:#8e8e8e;border-radius:0px;border-radius:3px 3px 0 0"></div>
<div class="a t" style="left:1854.1px;top:413.74px;width:23.1px;text-align:center;font-size:10px;color:#a5a5aa;letter-spacing:-0.3px">12</div>
<svg class="a" style="left:1859.6999999999998px;top:423.6px;color:#a2a2a6;" width="12" height="11" viewBox="0 0 16 16" fill="#a2a2a6"><path d="M8 3 C4 3 1.5 6 0.8 8 C1.5 10 4 13 8 13 C12 13 14.5 10 15.2 8 C14.5 6 12 3 8 3Z"/><circle cx="8" cy="8" r="3" fill="#282935"/><circle cx="8" cy="8" r="1.8"/></svg>
<div class="a" style="left:1638px;top:469px;width:245px;height:1.6px;background:#3c3d4a;border-radius:0px;"></div>
<svg class="a" style="left:1638.9px;top:499.6px;color:#9d9ea6;" width="8.4" height="4.6" viewBox="0 0 10.5 5.7" fill="#9d9ea6"><path fill="none" stroke="currentColor" stroke-width="1.05" d="M0.4 0.4 L5.25 5.3 L10.1 0.4"/></svg>
<div class="a t" style="left:1657.3px;top:493.43px;font-size:15.2px;color:#ffffff;font-weight:700;letter-spacing:0.13px;">Base Settings</div>
<div class="a" style="left:1638px;top:530.2px;width:244.8px;height:19.6px;background:#3d3f55;border-radius:4px;"></div>
<div class="a" style="left:1640.3px;top:532.3px;width:240.3px;height:15.3px;background:#5966f0;border-radius:3px;"></div>
<div class="a t" style="left:1642.9px;top:534.99px;font-size:11px;color:#f0f0f8;font-weight:400;letter-spacing:-0.15px;">General Strength</div>
<div class="a t" style="right:45px;top:536.59px;font-size:11px;color:#f0f0f8;font-weight:400;letter-spacing:-0.3px;">100.00</div>
<div class="a" style="left:1638px;top:560.3px;width:111.7px;height:35.3px;background:#22222e;border-radius:6px;border-top-right-radius:0;border-bottom-right-radius:0"></div>
<div class="a" style="left:1753.2px;top:560.3px;width:129.6px;height:35.3px;background:#22222e;border-radius:6px;border-top-left-radius:0;border-bottom-left-radius:0"></div>
<div class="a t" style="left:1645px;top:574.29px;font-size:11px;color:#f2f2f2;font-weight:400;letter-spacing:0px;">Combine Operation</div>
<div class="a t" style="left:1762px;top:574.29px;font-size:11px;color:#f2f2f2;font-weight:400;letter-spacing:-0.3px;">All</div>
<svg class="a" style="left:1859.8px;top:576px;color:#b6b6bb;" width="10" height="5.5" viewBox="0 0 10.5 5.7" fill="#b6b6bb"><path fill="none" stroke="currentColor" stroke-width="1.05" d="M0.4 0.4 L5.25 5.3 L10.1 0.4"/></svg>
<div class="a" style="left:1638px;top:608.2px;width:25.8px;height:25.5px;background:#3d3f55;border-radius:4px;"></div>
<div class="a t" style="left:1673.4px;top:615.69px;font-size:11px;color:#f2f2f2;font-weight:400;letter-spacing:-0.2px;">Invert</div>
<div class="a" style="left:1638px;top:644px;width:244.8px;height:19.6px;background:#3d3f55;border-radius:4px;"></div>
<div class="a t" style="left:1642.9px;top:648.39px;font-size:11px;color:#f0f0f8;font-weight:400;letter-spacing:0px;">Flatten Anchor</div>
<div class="a" style="left:1744.5px;top:647.0999999999999px;width:1.8px;height:13.4px;background:#5966f0;border-radius:0px;"></div>
<div class="a" style="left:1748.4px;top:647.0999999999999px;width:1.8px;height:13.4px;background:#5966f0;border-radius:0px;"></div>
<div class="a" style="left:1752.3px;top:647.0999999999999px;width:1.8px;height:13.4px;background:#5966f0;border-radius:0px;"></div>
<div class="a" style="left:1757.0px;top:646.1999999999999px;width:6.8px;height:15.2px;background:#5966f0;border-radius:1px;"></div>
<div class="a" style="left:1765.3px;top:647.0999999999999px;width:1.8px;height:13.4px;background:#5966f0;border-radius:0px;"></div>
<div class="a" style="left:1769.2px;top:647.0999999999999px;width:1.8px;height:13.4px;background:#5966f0;border-radius:0px;"></div>
<div class="a" style="left:1773.1px;top:647.0999999999999px;width:1.8px;height:13.4px;background:#5966f0;border-radius:0px;"></div>
<div class="a t" style="right:45px;top:649.99px;font-size:11px;color:#f0f0f8;font-weight:400;letter-spacing:-0.3px;">0.34</div>
<div class="a" style="left:1638px;top:674px;width:244.8px;height:19.6px;background:#3d3f55;border-radius:4px;"></div>
<div class="a" style="left:1640.3px;top:676.3px;width:117.3px;height:14.8px;background:#5966f0;border-radius:3px;"></div>
<div class="a t" style="left:1642.9px;top:679.69px;font-size:11px;color:#f0f0f8;font-weight:400;letter-spacing:-0.05px;">Flatten Strength</div>
<div class="a t" style="right:45px;top:680.09px;font-size:11px;color:#f0f0f8;font-weight:400;letter-spacing:-0.3px;">0.50</div>
<div class="a" style="left:1313px;top:279px;width:30px;height:30px;background:#5865f2;border-radius:8px;"></div>
<svg class="a" style="left:1320.5px;top:286.5px;color:#e6e6ee;" width="15" height="15" viewBox="0 0 16 16" fill="#e6e6ee"><circle cx="8" cy="8" r="6.8"/><circle cx="8" cy="8" r="2" fill="#5865f2"/><path fill="none" stroke="#5865f2" stroke-width="0.9" d="M8 1 V6 M1.9 11.5 L6.3 9 M14.1 11.5 L9.7 9"/></svg>
<div class="a" style="left:1313px;top:313px;width:30px;height:30px;background:#1f1f2c;border-radius:8px;"></div>
<svg class="a" style="left:1320.5px;top:320.5px;color:#d8d8d8;" width="15" height="15" viewBox="0 0 16 16" fill="#d8d8d8"><circle cx="8" cy="8" r="6.8"/><circle cx="8" cy="8" r="2" fill="#1f1f2c"/><path fill="none" stroke="#1f1f2c" stroke-width="0.9" d="M8 1 V6 M1.9 11.5 L6.3 9 M14.1 11.5 L9.7 9"/><path d="M10 2 L12.8 4 L10 7 Z" fill="#1f1f2c"/></svg>
<div class="a" style="left:1313px;top:347px;width:30px;height:30px;background:#1f1f2c;border-radius:8px;"></div>
<svg class="a" style="left:1320.5px;top:354.5px;color:#d8d8d8;" width="15" height="15" viewBox="0 0 16 16" fill="#d8d8d8"><circle cx="8" cy="8" r="6.8"/><circle cx="8" cy="8" r="5.6" fill="#1f1f2c"/><circle cx="8" cy="8" r="4.6"/><circle cx="8" cy="8" r="1.8" fill="#1f1f2c"/><path fill="none" stroke="#1f1f2c" stroke-width="0.9" d="M1.9 11.5 L6.3 9 M14.1 11.5 L9.7 9"/></svg>
<div class="a" style="left:1313px;top:381px;width:30px;height:30px;background:#1f1f2c;border-radius:8px;"></div>
<svg class="a" style="left:1320.5px;top:388.5px;color:#d8d8d8;" width="15" height="15" viewBox="0 0 16 16" fill="#d8d8d8"><path d="M8 15 C4.5 15 2.8 12.6 2.8 10 C2.8 7 5.5 5.5 6.5 1 C7.5 3 8.5 3.8 8.5 5.5 C9.5 4.8 10 4 10.2 3.4 C12 5 13.2 7.5 13.2 10 C13.2 12.8 11.2 15 8 15Z"/><circle cx="8" cy="10.5" r="2" fill="#1f1f2c"/></svg>
<div class="a" style="left:1313px;top:415px;width:30px;height:30px;background:#1f1f2c;border-radius:8px;"></div>
<svg class="a" style="left:1320.5px;top:422.5px;color:#d8d8d8;" width="15" height="15" viewBox="0 0 16 16" fill="#d8d8d8"><path d="M8 2 L15.5 13.5 H0.5 Z"/><path fill="#1f1f2c" d="M5.8 5.4 L8.4 7 L10.2 5.4 L9.4 4.2 L8.2 5.6 L7 4.4Z"/></svg>
<div class="a" style="left:1313px;top:449px;width:30px;height:30px;background:#1f1f2c;border-radius:8px;"></div>
<svg class="a" style="left:1320.5px;top:456.5px;color:#d8d8d8;" width="15" height="15" viewBox="0 0 16 16" fill="#d8d8d8"><path d="M1 13.5 Q8 9 15 13.5 Z"/><path d="M6.4 12 L7.2 6.4 H8 L8.2 12 Z"/><path d="M7.6 6.4 C5.8 4 3.8 4.4 2.8 6 C4.4 5.4 5.8 5.8 7.6 6.4Z M7.6 6.4 C8 3.4 10 2.4 11.6 3.4 C10 3.8 9 4.8 7.6 6.4Z M7.6 6.4 C9.6 5.4 11.6 6.4 12 8.4 C10.6 7.4 9.6 6.8 7.6 6.4Z"/><path d="M11.5 11 L12 8.6 L12.6 11Z"/></svg>
<div class="a" style="left:1313px;top:483px;width:30px;height:30px;background:#1f1f2c;border-radius:8px;"></div>
<svg class="a" style="left:1320.5px;top:490.5px;color:#d8d8d8;" width="15" height="15" viewBox="0 0 16 16" fill="#d8d8d8"><path d="M1.5 1.5 H5.5 V5.5 H1.5Z M6.5 1.5 H9.5 V5.5 H6.5Z M10.5 1.5 H14.5 V5.5 H10.5Z M1.5 6.5 H5.5 V9.5 H1.5Z M6.5 6.5 H9.5 V9.5 H6.5Z M10.5 6.5 H14.5 V9.5 H10.5Z M1.5 10.5 H5.5 V14.5 H1.5Z M6.5 10.5 H9.5 V14.5 H6.5Z M10.5 10.5 H14.5 V14.5 H10.5Z"/></svg>
<div class="a" style="left:1313px;top:536px;width:30px;height:30px;background:#5865f2;border-radius:8px;"></div>
<svg class="a" style="left:1320.5px;top:543.5px;color:#e6e6ee;" width="15" height="15" viewBox="0 0 16 16" fill="#e6e6ee"><path d="M8 0.5 L9.2 2.8 L11.8 1.6 L11.9 4.1 L14.6 4.6 L13.2 6.8 L15.3 8.6 L12.9 9.6 L13.6 12.2 L11 12 L10.2 14.6 L8 13.2 L5.8 14.6 L5 12 L2.4 12.2 L3.1 9.6 L0.7 8.6 L2.8 6.8 L1.4 4.6 L4.1 4.1 L4.2 1.6 L6.8 2.8Z"/><circle cx="8" cy="7.8" r="3.6" fill="#5865f2"/><circle cx="8" cy="7.8" r="2.8"/></svg>
<div class="a" style="left:1313px;top:570px;width:30px;height:30px;background:#1f1f2c;border-radius:8px;"></div>
<svg class="a" style="left:1320.5px;top:577.5px;color:#d8d8d8;" width="15" height="15" viewBox="0 0 16 16" fill="#d8d8d8"><path d="M6.5 2.5 C8 2.5 9.2 3.4 9.6 4.6 C10.2 4.4 11 4.5 11.6 4.9 C11.2 5.2 10.9 5.6 10.7 6 C9.6 5.8 8.6 6.4 8.1 7.4 C6.8 7.4 5.8 8.3 5.6 9.5 H2.6 C1.4 9.5 0.5 8.6 0.5 7.4 C0.5 6.3 1.3 5.4 2.4 5.3 C2.7 3.7 4.5 2.5 6.5 2.5Z"/><path d="M10.6 6.6 C12.4 6.6 13.6 7.8 13.8 9.4 C14.8 9.5 15.6 10.4 15.6 11.5 C15.6 12.6 14.7 13.5 13.6 13.5 H7 C5.8 13.5 5 12.6 5 11.5 C5 10.4 5.8 9.6 6.8 9.5 C7 8 8.2 7 9.6 7 C10 6.7 10.3 6.6 10.6 6.6Z"/></svg>
<div class="a" style="left:1313px;top:604px;width:30px;height:30px;background:#1f1f2c;border-radius:8px;"></div>
<svg class="a" style="left:1320.5px;top:611.5px;color:#d8d8d8;" width="15" height="15" viewBox="0 0 16 16" fill="#d8d8d8"><path fill="none" stroke="currentColor" stroke-width="1.5" d="M1 4 Q2.75 2.4 4.5 4 T8 4 T11.5 4 T15 4 M1 8 Q2.75 6.4 4.5 8 T8 8 T11.5 8 T15 8 M1 12 Q2.75 10.4 4.5 12 T8 12 T11.5 12 T15 12"/></svg>
<div class="a" style="left:1313px;top:657px;width:30px;height:30px;background:#5865f2;border-radius:8px;"></div>
<svg class="a" style="left:1320.5px;top:664.5px;color:#e6e6ee;" width="15" height="15" viewBox="0 0 16 16" fill="#e6e6ee"><path d="M6 2.5 L7.2 2.7 L7.6 4.2 L8.8 4.9 L10.2 4.4 L11 5.4 L10.2 6.7 L10.3 8.1 L11.4 9.1 L10.8 10.3 L9.2 10.1 L8.1 11 L7.8 12.5 L6.4 12.6 L5.9 11.1 L4.6 10.5 L3.2 11 L2.4 10 L3.2 8.7 L3.1 7.3 L1.9 6.4 L2.4 5.1 L4 5.2 L5.1 4.4Z"/><circle cx="6.6" cy="7.7" r="1.9" fill="#5865f2"/><circle cx="12.3" cy="3.6" r="2.4"/><circle cx="12.3" cy="3.6" r="1" fill="#5865f2"/><circle cx="12.3" cy="12.2" r="2.4"/><circle cx="12.3" cy="12.2" r="1" fill="#5865f2"/></svg>
<div class="a" style="left:1313px;top:691px;width:30px;height:30px;background:#5865f2;border-radius:8px;"></div>
<svg class="a" style="left:1320.5px;top:698.5px;color:#e6e6ee;" width="15" height="15" viewBox="0 0 16 16" fill="#e6e6ee"><path d="M8 3 C4 3 1.2 6 0.4 8 C1.2 10 4 13 8 13 C12 13 14.8 10 15.6 8 C14.8 6 12 3 8 3Z"/><circle cx="8" cy="8" r="3.4" fill="#5865f2"/><circle cx="8" cy="8" r="2.2"/><circle cx="9" cy="7" r="0.9" fill="#5865f2"/></svg>
<div class="a" style="left:1313px;top:725px;width:30px;height:30px;background:#5865f2;border-radius:8px;"></div>
<svg class="a" style="left:1320.5px;top:732.5px;color:#e6e6ee;" width="15" height="15" viewBox="0 0 16 16" fill="#e6e6ee"><path d="M0.8 1.5 H15.2 V3.2 L9.8 9 V14.8 L6.2 12.8 V9 L0.8 3.2 Z"/></svg>
<div class="a" style="left:1313px;top:759px;width:30px;height:30px;background:#5865f2;border-radius:8px;"></div>
<svg class="a" style="left:1320.5px;top:766.5px;color:#e6e6ee;" width="15" height="15" viewBox="0 0 16 16" fill="#e6e6ee"><path d="M8 1 L15.5 4.6 L8 8.2 L0.5 4.6 Z"/><path d="M2.4 6.9 L8 9.6 L13.6 6.9 L15.5 7.8 L8 11.4 L0.5 7.8 Z"/><path d="M2.4 10.1 L8 12.8 L13.6 10.1 L15.5 11 L8 14.6 L0.5 11 Z"/></svg>
<div class="a" style="left:1313px;top:812px;width:30px;height:30px;background:#1f1f2c;border-radius:8px;"></div>
<svg class="a" style="left:1320.5px;top:819.5px;color:#d8d8d8;" width="15" height="15" viewBox="0 0 16 16" fill="#d8d8d8"><circle cx="8" cy="8" r="6.8"/><circle cx="8" cy="8" r="1.8" fill="#1f1f2c"/></svg>
<div class="a" style="left:1313px;top:846px;width:30px;height:30px;background:#1f1f2c;border-radius:8px;"></div>
<svg class="a" style="left:1320.5px;top:853.5px;color:#d8d8d8;" width="15" height="15" viewBox="0 0 16 16" fill="#d8d8d8"><path d="M1 2.5 H6.2 L7.6 4 H15 V14 H1 Z"/><circle cx="4.4" cy="6.6" r="1.1" fill="#1f1f2c"/><path fill="#1f1f2c" d="M2.6 12.8 L6.2 8.6 L8.4 10.6 L10.2 8 L13.6 12.8Z"/></svg>
<div class="a" style="left:1313px;top:880px;width:30px;height:30px;background:#1f1f2c;border-radius:8px;"></div>
<svg class="a" style="left:1320.5px;top:887.5px;color:#d8d8d8;" width="15" height="15" viewBox="0 0 16 16" fill="#d8d8d8"><path d="M6.6 1.5 H9.4 V6.6 H12.4 L8 11 L3.6 6.6 H6.6 Z"/><rect x="2" y="12.6" width="12" height="1.6"/></svg>
<div class="a" style="left:1313px;top:914px;width:30px;height:30px;background:#1f1f2c;border-radius:8px;"></div>
<svg class="a" style="left:1320.5px;top:921.5px;color:#d8d8d8;" width="15" height="15" viewBox="0 0 16 16" fill="#d8d8d8"><path fill="none" stroke="currentColor" stroke-width="1.2" d="M1.2 7 L5 3 L8 5.6 L11.2 2.4 L14.8 4.8"/><rect x="1" y="9" width="2.2" height="6"/><rect x="4.8" y="6.8" width="2.2" height="8.2"/><rect x="8.6" y="9.6" width="2.2" height="5.4"/><rect x="12.4" y="7.4" width="2.2" height="7.6"/></svg>
</body></html>
